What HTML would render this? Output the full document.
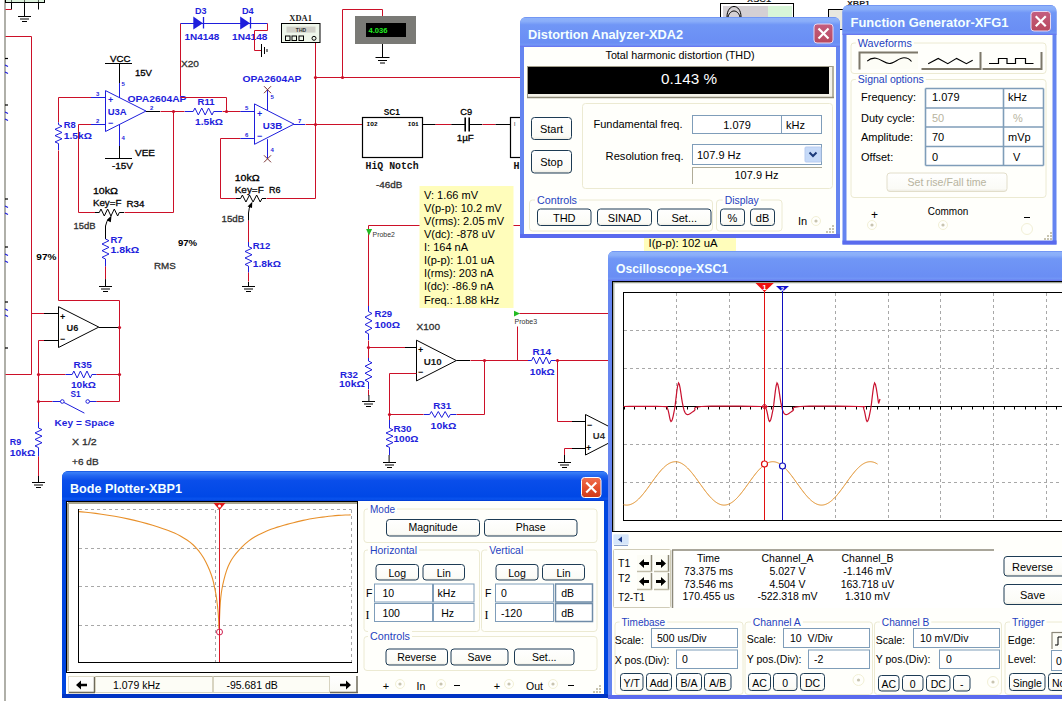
<!DOCTYPE html>
<html><head><meta charset="utf-8"><style>
html,body{margin:0;padding:0;background:#fff;width:1062px;height:701px;overflow:hidden}
svg{position:absolute;left:0;top:0;display:block}
</style></head><body>
<svg width="1062" height="701" viewBox="0 0 1062 701">
<rect x="0" y="0" width="1062" height="701" fill="#FFFFFF"/>
<defs>
<linearGradient id="tin" x1="0" y1="0" x2="0" y2="1">
 <stop offset="0" stop-color="#5A7EEE"/><stop offset="0.035" stop-color="#8EB2FA"/><stop offset="0.14" stop-color="#8AAEF9"/>
 <stop offset="0.26" stop-color="#7096F6"/><stop offset="0.85" stop-color="#6A8EF4"/><stop offset="0.93" stop-color="#7296F6"/><stop offset="1" stop-color="#6470EE"/>
</linearGradient>
<linearGradient id="tact" x1="0" y1="0" x2="0" y2="1">
 <stop offset="0" stop-color="#0A4AD8"/><stop offset="0.04" stop-color="#3A80F8"/><stop offset="0.16" stop-color="#2266F0"/>
 <stop offset="0.32" stop-color="#0A4EEA"/><stop offset="0.85" stop-color="#0048E6"/><stop offset="0.94" stop-color="#0A54EE"/><stop offset="1" stop-color="#0038D0"/>
</linearGradient>
<linearGradient id="cin" x1="0" y1="0" x2="0" y2="1">
 <stop offset="0" stop-color="#C45E80"/><stop offset="1" stop-color="#B8485E"/>
</linearGradient>
<linearGradient id="cact" x1="0" y1="0" x2="0" y2="1">
 <stop offset="0" stop-color="#F07050"/><stop offset="0.5" stop-color="#E4502C"/><stop offset="1" stop-color="#D03A18"/>
</linearGradient>
<linearGradient id="btn" x1="0" y1="0" x2="0" y2="1">
 <stop offset="0" stop-color="#FFFFFF"/><stop offset="0.85" stop-color="#FBFBF6"/><stop offset="1" stop-color="#ECEAE0"/>
</linearGradient>
</defs>
<line x1="5" y1="0" x2="5" y2="701" stroke="#85857A" stroke-width="1.3" />
<line x1="5" y1="58.5" x2="8" y2="58.5" stroke="#000" stroke-width="1.2" />
<line x1="5" y1="65" x2="8" y2="66.5" stroke="#1E1EDC" stroke-width="1.2" />
<line x1="5" y1="72" x2="8" y2="73.5" stroke="#1E1EDC" stroke-width="1.2" />
<line x1="5" y1="105" x2="8" y2="105" stroke="#000" stroke-width="1.2" />
<line x1="5" y1="112" x2="8" y2="113.5" stroke="#1E1EDC" stroke-width="1.2" />
<line x1="5" y1="119" x2="8" y2="120.5" stroke="#1E1EDC" stroke-width="1.2" />
<line x1="5" y1="199" x2="8" y2="199" stroke="#000" stroke-width="1.2" />
<line x1="5" y1="206" x2="8" y2="207.5" stroke="#1E1EDC" stroke-width="1.2" />
<line x1="5" y1="213" x2="8" y2="214.5" stroke="#1E1EDC" stroke-width="1.2" />
<line x1="5" y1="247" x2="8" y2="247" stroke="#000" stroke-width="1.2" />
<line x1="5" y1="254" x2="8" y2="255.5" stroke="#1E1EDC" stroke-width="1.2" />
<line x1="5" y1="261" x2="8" y2="262.5" stroke="#1E1EDC" stroke-width="1.2" />
<line x1="5" y1="302" x2="8" y2="302" stroke="#000" stroke-width="1.2" />
<line x1="5" y1="309" x2="8" y2="310.5" stroke="#1E1EDC" stroke-width="1.2" />
<line x1="5" y1="315" x2="8" y2="316.5" stroke="#1E1EDC" stroke-width="1.2" />
<line x1="5" y1="348" x2="8" y2="348" stroke="#000" stroke-width="1.2" />
<rect x="5.5" y="-5" width="39" height="7.5" fill="#DDF2DD" stroke="#000" stroke-width="1" rx="0" />
<line x1="11.5" y1="-5" x2="11.5" y2="2.5" stroke="#000" stroke-width="0.6" />
<line x1="24.5" y1="-5" x2="24.5" y2="2.5" stroke="#000" stroke-width="0.6" />
<line x1="38.5" y1="-5" x2="38.5" y2="2.5" stroke="#000" stroke-width="0.6" />
<line x1="11.5" y1="2" x2="11.5" y2="9.5" stroke="#000" stroke-width="1" />
<line x1="24.5" y1="2" x2="24.5" y2="16" stroke="#000" stroke-width="1" />
<line x1="38.5" y1="2" x2="38.5" y2="9.5" stroke="#000" stroke-width="1" />
<polyline points="5.5,9.5 11.5,9.5" stroke="#CC1028" stroke-width="1" fill="none" />
<line x1="18" y1="16.5" x2="31" y2="16.5" stroke="#000" stroke-width="1" />
<line x1="20" y1="19" x2="29" y2="19" stroke="#000" stroke-width="1" />
<line x1="22" y1="21.5" x2="27" y2="21.5" stroke="#000" stroke-width="1" />
<polyline points="5.5,36.5 31.5,36.5 31.5,374.5 5.5,374.5" stroke="#CC1028" stroke-width="1" fill="none" />
<polyline points="31.5,313.5 44.5,313.5" stroke="#CC1028" stroke-width="1" fill="none" />
<line x1="44" y1="313.5" x2="58.5" y2="313.5" stroke="#000" stroke-width="1" />
<polyline points="180.5,97.5 180.5,23.5" stroke="#CC1028" stroke-width="1" fill="none" />
<line x1="180.5" y1="23.5" x2="267.5" y2="23.5" stroke="#1E1EDC" stroke-width="1" />
<polygon points="193.3,16.6 202.9,23.3 193.3,29.5" stroke="none" stroke-width="1" fill="#1E1EDC" />
<line x1="203.5" y1="17" x2="203.5" y2="28.5" stroke="#1E1EDC" stroke-width="1.3" />
<polygon points="240.2,16.6 250,23.3 240.2,29.5" stroke="none" stroke-width="1" fill="#1E1EDC" />
<line x1="250.5" y1="17" x2="250.5" y2="28.5" stroke="#1E1EDC" stroke-width="1.3" />
<text xml:space="preserve" x="194.9" y="13.7" font-family='"Liberation Sans", sans-serif' font-size="9.2" fill="#1E1EDC" font-weight="bold" text-anchor="start" textLength="11.6" lengthAdjust="spacingAndGlyphs" >D3</text>
<text xml:space="preserve" x="242" y="13.7" font-family='"Liberation Sans", sans-serif' font-size="9.2" fill="#1E1EDC" font-weight="bold" text-anchor="start" textLength="11.7" lengthAdjust="spacingAndGlyphs" >D4</text>
<text xml:space="preserve" x="184.5" y="39.6" font-family='"Liberation Sans", sans-serif' font-size="9.2" fill="#1E1EDC" font-weight="bold" text-anchor="start" textLength="34.7" lengthAdjust="spacingAndGlyphs" >1N4148</text>
<text xml:space="preserve" x="232.1" y="39.6" font-family='"Liberation Sans", sans-serif' font-size="9.2" fill="#1E1EDC" font-weight="bold" text-anchor="start" textLength="35.3" lengthAdjust="spacingAndGlyphs" >1N4148</text>
<polyline points="267.5,23.5 267.5,30.5 254.5,30.5 254.5,50.5 261.5,50.5" stroke="#CC1028" stroke-width="1" fill="none" />
<line x1="261.5" y1="44" x2="261.5" y2="57" stroke="#000" stroke-width="1" />
<line x1="264.5" y1="47" x2="264.5" y2="54" stroke="#000" stroke-width="1" />
<line x1="267" y1="49" x2="267" y2="52" stroke="#000" stroke-width="1" />
<text xml:space="preserve" x="181" y="66.5" font-family='"Liberation Sans", sans-serif' font-size="9.6" fill="#303030" font-weight="normal" text-anchor="start" textLength="18" lengthAdjust="spacingAndGlyphs" stroke="#303030" stroke-width="0.3">X20</text>
<text xml:space="preserve" x="110" y="61.5" font-family='"Liberation Sans", sans-serif' font-size="9.6" fill="#000" font-weight="normal" text-anchor="start" textLength="20.5" lengthAdjust="spacingAndGlyphs" stroke="#000" stroke-width="0.3">VCC</text>
<line x1="105" y1="63.5" x2="132" y2="63.5" stroke="#000" stroke-width="1" />
<line x1="119.5" y1="63.5" x2="119.5" y2="83" stroke="#000" stroke-width="1" />
<line x1="119.5" y1="83" x2="119.5" y2="98" stroke="#1E1EDC" stroke-width="1" />
<text xml:space="preserve" x="135" y="75.5" font-family='"Liberation Sans", sans-serif' font-size="9.6" fill="#000" font-weight="normal" text-anchor="start" textLength="17" lengthAdjust="spacingAndGlyphs" stroke="#000" stroke-width="0.3">15V</text>
<text xml:space="preserve" x="121.5" y="86" font-family='"Liberation Sans", sans-serif' font-size="6" fill="#1E1EDC" font-weight="bold" text-anchor="start" >5</text>
<text xml:space="preserve" x="96" y="96" font-family='"Liberation Sans", sans-serif' font-size="6" fill="#1E1EDC" font-weight="bold" text-anchor="start" >3</text>
<text xml:space="preserve" x="96" y="123" font-family='"Liberation Sans", sans-serif' font-size="6" fill="#1E1EDC" font-weight="bold" text-anchor="start" >2</text>
<text xml:space="preserve" x="121.5" y="140" font-family='"Liberation Sans", sans-serif' font-size="6" fill="#1E1EDC" font-weight="bold" text-anchor="start" >4</text>
<text xml:space="preserve" x="150" y="110" font-family='"Liberation Sans", sans-serif' font-size="6" fill="#1E1EDC" font-weight="bold" text-anchor="start" >2</text>
<polygon points="105.5,90.6 146,111.05 105.5,131.5" stroke="#1E1EDC" stroke-width="1" fill="none" />
<text xml:space="preserve" x="108" y="103.3" font-family='"Liberation Sans", sans-serif' font-size="9" fill="#1E1EDC" font-weight="bold" text-anchor="start" >+</text>
<text xml:space="preserve" x="108" y="125.5" font-family='"Liberation Sans", sans-serif' font-size="9" fill="#1E1EDC" font-weight="bold" text-anchor="start" >−</text>
<text xml:space="preserve" x="107.7" y="114.8" font-family='"Liberation Sans", sans-serif' font-size="9.2" fill="#1E1EDC" font-weight="bold" text-anchor="start" textLength="19" lengthAdjust="spacingAndGlyphs" >U3A</text>
<text xml:space="preserve" x="127.5" y="102" font-family='"Liberation Sans", sans-serif' font-size="9.2" fill="#1E1EDC" font-weight="bold" text-anchor="start" textLength="59" lengthAdjust="spacingAndGlyphs" >OPA2604AP</text>
<polyline points="58.5,97.5 91.5,97.5" stroke="#CC1028" stroke-width="1" fill="none" />
<line x1="91" y1="97.5" x2="105.6" y2="97.5" stroke="#1E1EDC" stroke-width="1" />
<polyline points="78.5,124.5 91.5,124.5" stroke="#CC1028" stroke-width="1" fill="none" />
<line x1="91" y1="124.5" x2="105.6" y2="124.5" stroke="#1E1EDC" stroke-width="1" />
<line x1="119.5" y1="124.5" x2="119.5" y2="146" stroke="#1E1EDC" stroke-width="1" />
<line x1="119.5" y1="146" x2="119.5" y2="158.5" stroke="#000" stroke-width="1" />
<line x1="105" y1="158.5" x2="132" y2="158.5" stroke="#000" stroke-width="1" />
<text xml:space="preserve" x="135" y="155.5" font-family='"Liberation Sans", sans-serif' font-size="9.6" fill="#000" font-weight="normal" text-anchor="start" textLength="20" lengthAdjust="spacingAndGlyphs" stroke="#000" stroke-width="0.3">VEE</text>
<text xml:space="preserve" x="112" y="168.5" font-family='"Liberation Sans", sans-serif' font-size="9.6" fill="#000" font-weight="normal" text-anchor="start" textLength="21" lengthAdjust="spacingAndGlyphs" stroke="#000" stroke-width="0.3">-15V</text>
<polyline points="58.5,97.5 58.5,122.5" stroke="#CC1028" stroke-width="1" fill="none" />
<line x1="58.5" y1="122.5" x2="58.5" y2="124.6" stroke="#1E1EDC" stroke-width="1" />
<polyline points="58.5,124.6 62.0,126.175 55.0,129.325 62.0,132.475 55.0,135.625 62.0,138.775 55.0,141.925 58.5,143.5" stroke="#1E1EDC" stroke-width="1" fill="none" />
<line x1="58.5" y1="143.5" x2="58.5" y2="150" stroke="#1E1EDC" stroke-width="1" />
<polyline points="58.5,150.5 58.5,300.5 119.5,300.5 119.5,401.5" stroke="#CC1028" stroke-width="1" fill="none" />
<text xml:space="preserve" x="63.7" y="127.6" font-family='"Liberation Sans", sans-serif' font-size="9.2" fill="#1E1EDC" font-weight="bold" text-anchor="start" textLength="12" lengthAdjust="spacingAndGlyphs" >R8</text>
<text xml:space="preserve" x="63.7" y="139" font-family='"Liberation Sans", sans-serif' font-size="9.2" fill="#1E1EDC" font-weight="bold" text-anchor="start" textLength="28.2" lengthAdjust="spacingAndGlyphs" >1.5kΩ</text>
<polyline points="78.5,124.5 78.5,212.5 95.5,212.5" stroke="#CC1028" stroke-width="1" fill="none" />
<line x1="95" y1="212.5" x2="99.3" y2="212.5" stroke="#000" stroke-width="1" />
<polyline points="99.3,212.5 100.96666666666667,209.0 104.3,216.0 107.63333333333333,209.0 110.96666666666667,216.0 114.3,209.0 117.63333333333333,216.0 119.3,212.5" stroke="#000" stroke-width="1" fill="none" />
<line x1="119.3" y1="212.5" x2="124" y2="212.5" stroke="#000" stroke-width="1" />
<polyline points="124.5,212.5 173.5,212.5 173.5,111.5" stroke="#CC1028" stroke-width="1" fill="none" />
<path d="M105.5,239 L105.5,226 Q106.5,221 109,218.5" stroke="#000" stroke-width="1" fill="none"/>
<polygon points="111.6,215.2 106.6,220.2 110.8,222.2" stroke="none" stroke-width="1" fill="#000" />
<text xml:space="preserve" x="92.9" y="194" font-family='"Liberation Sans", sans-serif' font-size="9.6" fill="#000" font-weight="normal" text-anchor="start" textLength="25" lengthAdjust="spacingAndGlyphs" stroke="#000" stroke-width="0.3">10kΩ</text>
<text xml:space="preserve" x="92.9" y="205.7" font-family='"Liberation Sans", sans-serif' font-size="9.6" fill="#000" font-weight="normal" text-anchor="start" textLength="28.5" lengthAdjust="spacingAndGlyphs" stroke="#000" stroke-width="0.3">Key=F</text>
<text xml:space="preserve" x="126.4" y="206.7" font-family='"Liberation Sans", sans-serif' font-size="9.6" fill="#000" font-weight="normal" text-anchor="start" textLength="18" lengthAdjust="spacingAndGlyphs" stroke="#000" stroke-width="0.3">R34</text>
<text xml:space="preserve" x="73.6" y="229" font-family='"Liberation Sans", sans-serif' font-size="9.6" fill="#303030" font-weight="normal" text-anchor="start" textLength="22" lengthAdjust="spacingAndGlyphs" stroke="#303030" stroke-width="0.3">15dB</text>
<polyline points="105.5,239 109.0,240.66666666666666 102.0,244.0 109.0,247.33333333333334 102.0,250.66666666666666 109.0,254.0 102.0,257.3333333333333 105.5,259" stroke="#1E1EDC" stroke-width="1" fill="none" />
<line x1="105.5" y1="259" x2="105.5" y2="266.7" stroke="#1E1EDC" stroke-width="1" />
<polyline points="105.5,266.5 105.5,279.5" stroke="#CC1028" stroke-width="1" fill="none" />
<line x1="105.5" y1="279.2" x2="105.5" y2="286.3" stroke="#000" stroke-width="1" />
<line x1="99.0" y1="286.5" x2="112.0" y2="286.5" stroke="#000" stroke-width="1" />
<line x1="101.0" y1="289.0" x2="110.0" y2="289.0" stroke="#000" stroke-width="1" />
<line x1="103.0" y1="291.5" x2="108.0" y2="291.5" stroke="#000" stroke-width="1" />
<text xml:space="preserve" x="110.4" y="243" font-family='"Liberation Sans", sans-serif' font-size="9.2" fill="#1E1EDC" font-weight="bold" text-anchor="start" textLength="12.2" lengthAdjust="spacingAndGlyphs" >R7</text>
<text xml:space="preserve" x="110.4" y="252.9" font-family='"Liberation Sans", sans-serif' font-size="9.2" fill="#1E1EDC" font-weight="bold" text-anchor="start" textLength="28.9" lengthAdjust="spacingAndGlyphs" >1.8kΩ</text>
<text xml:space="preserve" x="177.9" y="246.4" font-family='"Liberation Sans", sans-serif' font-size="9.6" fill="#000" font-weight="bold" text-anchor="start" textLength="19.2" lengthAdjust="spacingAndGlyphs" >97%</text>
<text xml:space="preserve" x="153.9" y="268.6" font-family='"Liberation Sans", sans-serif' font-size="9.6" fill="#303030" font-weight="normal" text-anchor="start" textLength="21.8" lengthAdjust="spacingAndGlyphs" stroke="#303030" stroke-width="0.3">RMS</text>
<text xml:space="preserve" x="36.3" y="260" font-family='"Liberation Sans", sans-serif' font-size="9.6" fill="#000" font-weight="bold" text-anchor="start" textLength="20.1" lengthAdjust="spacingAndGlyphs" >97%</text>
<line x1="146" y1="111.5" x2="160" y2="111.5" stroke="#000" stroke-width="1" />
<polyline points="160.5,111.5 184.5,111.5" stroke="#CC1028" stroke-width="1" fill="none" />
<line x1="184.8" y1="111.5" x2="193.2" y2="111.5" stroke="#1E1EDC" stroke-width="1" />
<polyline points="193.2,111.5 194.90833333333333,108.0 198.325,115.0 201.74166666666665,108.0 205.15833333333333,115.0 208.575,108.0 211.99166666666665,115.0 213.7,111.5" stroke="#1E1EDC" stroke-width="1" fill="none" />
<line x1="213.7" y1="111.5" x2="222" y2="111.5" stroke="#1E1EDC" stroke-width="1" />
<polyline points="222.5,111.5 240.5,111.5" stroke="#CC1028" stroke-width="1" fill="none" />
<line x1="240.4" y1="111.5" x2="254.4" y2="111.5" stroke="#1E1EDC" stroke-width="1" />
<circle cx="173.5" cy="111.5" r="1.6" fill="#CC1028"/>
<circle cx="226.5" cy="111.5" r="1.6" fill="#CC1028"/>
<polyline points="180.5,97.5 226.5,97.5 226.5,111.5" stroke="#CC1028" stroke-width="1" fill="none" />
<text xml:space="preserve" x="197.5" y="104.9" font-family='"Liberation Sans", sans-serif' font-size="9.2" fill="#1E1EDC" font-weight="bold" text-anchor="start" textLength="17" lengthAdjust="spacingAndGlyphs" >R11</text>
<text xml:space="preserve" x="195" y="124.8" font-family='"Liberation Sans", sans-serif' font-size="9.2" fill="#1E1EDC" font-weight="bold" text-anchor="start" textLength="28" lengthAdjust="spacingAndGlyphs" >1.5kΩ</text>
<text xml:space="preserve" x="242.5" y="82" font-family='"Liberation Sans", sans-serif' font-size="9.2" fill="#1E1EDC" font-weight="bold" text-anchor="start" textLength="59" lengthAdjust="spacingAndGlyphs" >OPA2604AP</text>
<polygon points="254.5,103.9 294,124.10000000000001 254.5,144.3" stroke="#1E1EDC" stroke-width="1" fill="none" />
<text xml:space="preserve" x="257" y="116.5" font-family='"Liberation Sans", sans-serif' font-size="9" fill="#1E1EDC" font-weight="bold" text-anchor="start" >+</text>
<text xml:space="preserve" x="257" y="138.5" font-family='"Liberation Sans", sans-serif' font-size="9" fill="#1E1EDC" font-weight="bold" text-anchor="start" >−</text>
<text xml:space="preserve" x="262.8" y="129" font-family='"Liberation Sans", sans-serif' font-size="9.2" fill="#1E1EDC" font-weight="bold" text-anchor="start" textLength="19.5" lengthAdjust="spacingAndGlyphs" >U3B</text>
<text xml:space="preserve" x="245" y="110" font-family='"Liberation Sans", sans-serif' font-size="6" fill="#1E1EDC" font-weight="bold" text-anchor="start" >5</text>
<text xml:space="preserve" x="245" y="137" font-family='"Liberation Sans", sans-serif' font-size="6" fill="#1E1EDC" font-weight="bold" text-anchor="start" >6</text>
<text xml:space="preserve" x="270.5" y="99" font-family='"Liberation Sans", sans-serif' font-size="6" fill="#1E1EDC" font-weight="bold" text-anchor="start" >5</text>
<text xml:space="preserve" x="270.5" y="152" font-family='"Liberation Sans", sans-serif' font-size="6" fill="#1E1EDC" font-weight="bold" text-anchor="start" >4</text>
<text xml:space="preserve" x="298" y="123" font-family='"Liberation Sans", sans-serif' font-size="6" fill="#1E1EDC" font-weight="bold" text-anchor="start" >7</text>
<line x1="267.5" y1="89.7" x2="267.5" y2="110" stroke="#1E1EDC" stroke-width="1" />
<line x1="267.5" y1="139.2" x2="267.5" y2="158.8" stroke="#1E1EDC" stroke-width="1" />
<line x1="264.0" y1="86.2" x2="271.0" y2="93.2" stroke="#7A3030" stroke-width="1" />
<line x1="264.0" y1="93.2" x2="271.0" y2="86.2" stroke="#7A3030" stroke-width="1" />
<line x1="264.0" y1="155.3" x2="271.0" y2="162.3" stroke="#7A3030" stroke-width="1" />
<line x1="264.0" y1="162.3" x2="271.0" y2="155.3" stroke="#7A3030" stroke-width="1" />
<polyline points="220.5,138.5 240.5,138.5" stroke="#CC1028" stroke-width="1" fill="none" />
<line x1="240.4" y1="138.5" x2="254.4" y2="138.5" stroke="#1E1EDC" stroke-width="1" />
<line x1="294" y1="124.5" x2="305" y2="124.5" stroke="#1E1EDC" stroke-width="1" />
<polyline points="305.5,124.5 362.5,124.5" stroke="#CC1028" stroke-width="1" fill="none" />
<circle cx="315.5" cy="124.5" r="1.6" fill="#CC1028"/>
<circle cx="315.5" cy="77.5" r="1.6" fill="#CC1028"/>
<circle cx="342.5" cy="77.5" r="1.6" fill="#CC1028"/>
<polyline points="220.5,138.5 220.5,198.5 236.5,198.5" stroke="#CC1028" stroke-width="1" fill="none" />
<line x1="236" y1="198.5" x2="240.6" y2="198.5" stroke="#000" stroke-width="1" />
<polyline points="240.6,198.5 242.38333333333333,195.0 245.95,202.0 249.51666666666665,195.0 253.08333333333334,202.0 256.65,195.0 260.21666666666664,202.0 262,198.5" stroke="#000" stroke-width="1" fill="none" />
<line x1="262" y1="198.5" x2="266" y2="198.5" stroke="#000" stroke-width="1" />
<polyline points="266.5,198.5 315.5,198.5 315.5,42.5" stroke="#CC1028" stroke-width="1" fill="none" />
<path d="M248.5,220.7 L248.5,213 Q249,207.5 250.5,205" stroke="#000" stroke-width="1" fill="none"/>
<polygon points="252.3,201.8 247.6,206.5 252,208" stroke="none" stroke-width="1" fill="#000" />
<text xml:space="preserve" x="234.7" y="181.3" font-family='"Liberation Sans", sans-serif' font-size="9.6" fill="#000" font-weight="normal" text-anchor="start" textLength="25" lengthAdjust="spacingAndGlyphs" stroke="#000" stroke-width="0.3">10kΩ</text>
<text xml:space="preserve" x="234.7" y="192.5" font-family='"Liberation Sans", sans-serif' font-size="9.6" fill="#000" font-weight="normal" text-anchor="start" textLength="29.1" lengthAdjust="spacingAndGlyphs" stroke="#000" stroke-width="0.3">Key=F</text>
<text xml:space="preserve" x="269" y="192.5" font-family='"Liberation Sans", sans-serif' font-size="9.6" fill="#000" font-weight="normal" text-anchor="start" textLength="11.5" lengthAdjust="spacingAndGlyphs" stroke="#000" stroke-width="0.3">R6</text>
<text xml:space="preserve" x="221.5" y="221.6" font-family='"Liberation Sans", sans-serif' font-size="9.6" fill="#303030" font-weight="normal" text-anchor="start" textLength="22.8" lengthAdjust="spacingAndGlyphs" stroke="#303030" stroke-width="0.3">15dB</text>
<polyline points="248.5,220.5 248.5,242.5" stroke="#CC1028" stroke-width="1" fill="none" />
<line x1="248.5" y1="242" x2="248.5" y2="246.6" stroke="#1E1EDC" stroke-width="1" />
<polyline points="248.5,246.6 252.0,248.225 245.0,251.475 252.0,254.725 245.0,257.975 252.0,261.225 245.0,264.475 248.5,266.1" stroke="#1E1EDC" stroke-width="1" fill="none" />
<line x1="248.5" y1="266.1" x2="248.5" y2="272.6" stroke="#1E1EDC" stroke-width="1" />
<polyline points="248.5,272.5 248.5,281.5" stroke="#CC1028" stroke-width="1" fill="none" />
<line x1="248.5" y1="281.9" x2="248.5" y2="286.5" stroke="#000" stroke-width="1" />
<line x1="242.0" y1="286.5" x2="255.0" y2="286.5" stroke="#000" stroke-width="1" />
<line x1="244.0" y1="289.0" x2="253.0" y2="289.0" stroke="#000" stroke-width="1" />
<line x1="246.0" y1="291.5" x2="251.0" y2="291.5" stroke="#000" stroke-width="1" />
<text xml:space="preserve" x="252.7" y="249.4" font-family='"Liberation Sans", sans-serif' font-size="9.2" fill="#1E1EDC" font-weight="bold" text-anchor="start" textLength="17.6" lengthAdjust="spacingAndGlyphs" >R12</text>
<text xml:space="preserve" x="252.7" y="267" font-family='"Liberation Sans", sans-serif' font-size="9.2" fill="#1E1EDC" font-weight="bold" text-anchor="start" textLength="28.2" lengthAdjust="spacingAndGlyphs" >1.8kΩ</text>
<text xml:space="preserve" x="289.3" y="20.7" font-family='"Liberation Serif", serif' font-size="9" fill="#222" font-weight="bold" text-anchor="start" textLength="22.6" lengthAdjust="spacingAndGlyphs" >XDA1</text>
<rect x="281.5" y="23.5" width="38.5" height="19" fill="#EEF6EA" stroke="#000" stroke-width="1" rx="0" />
<rect x="286.5" y="26.6" width="29" height="6" fill="#D0D0C8" stroke="none" stroke-width="1" rx="0" />
<text xml:space="preserve" x="301" y="32" font-family='"Liberation Sans", sans-serif' font-size="5" fill="#333" font-weight="bold" text-anchor="middle" >THD</text>
<rect x="285.5" y="36" width="4.5" height="4.5" fill="none" stroke="#000" stroke-width="1" rx="0" />
<rect x="292" y="36" width="4.5" height="4.5" fill="none" stroke="#000" stroke-width="1" rx="0" />
<rect x="299" y="36" width="4.5" height="4.5" fill="none" stroke="#000" stroke-width="1" rx="0" />
<circle cx="314" cy="38.3" r="2" fill="none" stroke="#000" stroke-width="1"/>
<polyline points="315.5,77.5 520.5,77.5" stroke="#CC1028" stroke-width="1" fill="none" />
<polyline points="342.5,77.5 342.5,9.5 382.5,9.5 382.5,16.5" stroke="#CC1028" stroke-width="1" fill="none" />
<rect x="355" y="16" width="61" height="28" fill="#7A7A76" stroke="none" stroke-width="1" rx="0" />
<rect x="366" y="23" width="40" height="14" fill="#000" stroke="none" stroke-width="1" rx="0" />
<text xml:space="preserve" x="368.5" y="33" font-family='"Liberation Sans", sans-serif' font-size="7" fill="#22EE22" font-weight="bold" text-anchor="start" textLength="19" lengthAdjust="spacingAndGlyphs" >4.036</text>
<line x1="382.5" y1="44" x2="382.5" y2="57" stroke="#000" stroke-width="1" />
<line x1="375.5" y1="57.5" x2="389.5" y2="57.5" stroke="#000" stroke-width="1" />
<line x1="378" y1="60.5" x2="387" y2="60.5" stroke="#000" stroke-width="1" />
<line x1="380" y1="63" x2="385" y2="63" stroke="#000" stroke-width="1" />
<rect x="362.5" y="117.5" width="60" height="40" fill="#FFF" stroke="#000" stroke-width="1.2" rx="0" />
<text xml:space="preserve" x="383.7" y="115" font-family='"Liberation Sans", sans-serif' font-size="9.2" fill="#000" font-weight="bold" text-anchor="start" textLength="16.3" lengthAdjust="spacingAndGlyphs" >SC1</text>
<text xml:space="preserve" x="366.6" y="125.6" font-family='"Liberation Mono", monospace' font-size="5" fill="#000" font-weight="bold" text-anchor="start" textLength="11" lengthAdjust="spacingAndGlyphs" >IO2</text>
<text xml:space="preserve" x="407.8" y="125.6" font-family='"Liberation Mono", monospace' font-size="5" fill="#000" font-weight="bold" text-anchor="start" textLength="11" lengthAdjust="spacingAndGlyphs" >IO1</text>
<text xml:space="preserve" x="365.6" y="168.8" font-family='"Liberation Mono", monospace' font-size="10" fill="#111" font-weight="bold" text-anchor="start" textLength="53" lengthAdjust="spacingAndGlyphs" >HiQ Notch</text>
<text xml:space="preserve" x="376" y="187.7" font-family='"Liberation Sans", sans-serif' font-size="9.6" fill="#303030" font-weight="normal" text-anchor="start" textLength="26.4" lengthAdjust="spacingAndGlyphs" stroke="#303030" stroke-width="0.3">-46dB</text>
<line x1="422.6" y1="124.5" x2="435.7" y2="124.5" stroke="#000" stroke-width="1" />
<polyline points="435.5,124.5 451.5,124.5" stroke="#CC1028" stroke-width="1" fill="none" />
<line x1="451.3" y1="124.5" x2="465" y2="124.5" stroke="#000" stroke-width="1" />
<line x1="465.2" y1="117.4" x2="465.2" y2="131.5" stroke="#000" stroke-width="1.6" />
<line x1="469.2" y1="117.4" x2="469.2" y2="131.5" stroke="#000" stroke-width="1.6" />
<line x1="469" y1="124.5" x2="482.3" y2="124.5" stroke="#000" stroke-width="1" />
<polyline points="482.5,124.5 495.5,124.5" stroke="#CC1028" stroke-width="1" fill="none" />
<line x1="495.5" y1="124.5" x2="510.3" y2="124.5" stroke="#000" stroke-width="1" />
<text xml:space="preserve" x="460.3" y="115" font-family='"Liberation Sans", sans-serif' font-size="9.6" fill="#000" font-weight="normal" text-anchor="start" textLength="11.9" lengthAdjust="spacingAndGlyphs" stroke="#000" stroke-width="0.3">C9</text>
<text xml:space="preserve" x="456.7" y="140.5" font-family='"Liberation Sans", sans-serif' font-size="9.6" fill="#000" font-weight="normal" text-anchor="start" textLength="17.1" lengthAdjust="spacingAndGlyphs" stroke="#000" stroke-width="0.3">1µF</text>
<rect x="510.5" y="117.5" width="30" height="40" fill="#FFF" stroke="#000" stroke-width="1.2" rx="0" />
<text xml:space="preserve" x="514" y="125.6" font-family='"Liberation Sans", sans-serif' font-size="5" fill="#000" font-weight="normal" text-anchor="start" >I</text>
<text xml:space="preserve" x="513.4" y="168.8" font-family='"Liberation Mono", monospace' font-size="10" fill="#111" font-weight="bold" text-anchor="start" >H</text>
<polyline points="368.5,225.5 520.5,225.5" stroke="#CC1028" stroke-width="1" fill="none" />
<polyline points="368.5,225.5 368.5,306.5" stroke="#CC1028" stroke-width="1" fill="none" />
<line x1="368.5" y1="306" x2="368.5" y2="311.6" stroke="#1E1EDC" stroke-width="1" />
<polygon points="366.1,228.9 372.1,228.9 369,235.4" stroke="none" stroke-width="1" fill="#22BB22" />
<text xml:space="preserve" x="372.6" y="237" font-family='"Liberation Sans", sans-serif' font-size="6.5" fill="#333" font-weight="normal" text-anchor="start" textLength="22.3" lengthAdjust="spacingAndGlyphs" >Probe2</text>
<polyline points="368.5,311.6 372.0,313.45000000000005 365.0,317.15000000000003 372.0,320.85 365.0,324.55 372.0,328.25 365.0,331.95 368.5,333.8" stroke="#1E1EDC" stroke-width="1" fill="none" />
<line x1="368.5" y1="333.8" x2="368.5" y2="340" stroke="#1E1EDC" stroke-width="1" />
<polyline points="368.5,340.5 368.5,358.5" stroke="#CC1028" stroke-width="1" fill="none" />
<circle cx="368.5" cy="347.5" r="1.6" fill="#CC1028"/>
<polyline points="368.5,347.5 405.5,347.5" stroke="#CC1028" stroke-width="1" fill="none" />
<line x1="405" y1="347.5" x2="416.5" y2="347.5" stroke="#000" stroke-width="1" />
<line x1="368.5" y1="358" x2="368.5" y2="361" stroke="#1E1EDC" stroke-width="1" />
<polyline points="368.5,361 372.0,362.75 365.0,366.25 372.0,369.75 365.0,373.25 372.0,376.75 365.0,380.25 368.5,382" stroke="#1E1EDC" stroke-width="1" fill="none" />
<line x1="368.5" y1="382" x2="368.5" y2="389" stroke="#1E1EDC" stroke-width="1" />
<polyline points="368.5,389.5 368.5,395.5" stroke="#CC1028" stroke-width="1" fill="none" />
<line x1="368.9" y1="395" x2="368.9" y2="401" stroke="#000" stroke-width="1" />
<line x1="362.0" y1="401.5" x2="375.0" y2="401.5" stroke="#000" stroke-width="1" />
<line x1="364.0" y1="404.0" x2="373.0" y2="404.0" stroke="#000" stroke-width="1" />
<line x1="366.0" y1="406.5" x2="371.0" y2="406.5" stroke="#000" stroke-width="1" />
<text xml:space="preserve" x="374.5" y="317" font-family='"Liberation Sans", sans-serif' font-size="9.2" fill="#1E1EDC" font-weight="bold" text-anchor="start" textLength="17.6" lengthAdjust="spacingAndGlyphs" >R29</text>
<text xml:space="preserve" x="374.5" y="328.3" font-family='"Liberation Sans", sans-serif' font-size="9.2" fill="#1E1EDC" font-weight="bold" text-anchor="start" textLength="25.6" lengthAdjust="spacingAndGlyphs" >100Ω</text>
<text xml:space="preserve" x="340" y="377.5" font-family='"Liberation Sans", sans-serif' font-size="9.2" fill="#1E1EDC" font-weight="bold" text-anchor="start" textLength="18" lengthAdjust="spacingAndGlyphs" >R32</text>
<text xml:space="preserve" x="339" y="387.2" font-family='"Liberation Sans", sans-serif' font-size="9.2" fill="#1E1EDC" font-weight="bold" text-anchor="start" textLength="26" lengthAdjust="spacingAndGlyphs" >10kΩ</text>
<text xml:space="preserve" x="416.5" y="329.5" font-family='"Liberation Sans", sans-serif' font-size="9.6" fill="#303030" font-weight="normal" text-anchor="start" textLength="23.5" lengthAdjust="spacingAndGlyphs" stroke="#303030" stroke-width="0.3">X100</text>
<polygon points="416.5,340.2 456.3,360.54999999999995 416.5,380.9" stroke="#000" stroke-width="1" fill="none" />
<text xml:space="preserve" x="418" y="352.5" font-family='"Liberation Sans", sans-serif' font-size="9" fill="#000" font-weight="bold" text-anchor="start" >+</text>
<text xml:space="preserve" x="418" y="375" font-family='"Liberation Sans", sans-serif' font-size="9" fill="#000" font-weight="bold" text-anchor="start" >−</text>
<text xml:space="preserve" x="423.7" y="365" font-family='"Liberation Sans", sans-serif' font-size="9.2" fill="#202020" font-weight="bold" text-anchor="start" textLength="18" lengthAdjust="spacingAndGlyphs" >U10</text>
<line x1="456.3" y1="360.5" x2="470" y2="360.5" stroke="#000" stroke-width="1" />
<polyline points="470.5,360.5 528.5,360.5" stroke="#CC1028" stroke-width="1" fill="none" />
<line x1="528" y1="360.5" x2="531.7" y2="360.5" stroke="#1E1EDC" stroke-width="1" />
<polyline points="531.7,360.5 533.3083333333334,357.0 536.5250000000001,364.0 539.7416666666667,357.0 542.9583333333334,364.0 546.175,357.0 549.3916666666667,364.0 551,360.5" stroke="#1E1EDC" stroke-width="1" fill="none" />
<line x1="551" y1="360.5" x2="555.9" y2="360.5" stroke="#1E1EDC" stroke-width="1" />
<polyline points="555.5,360.5 610.5,360.5" stroke="#CC1028" stroke-width="1" fill="none" />
<circle cx="484.5" cy="360.5" r="1.6" fill="#CC1028"/>
<circle cx="557.5" cy="360.5" r="1.6" fill="#CC1028"/>
<polyline points="484.5,360.5 484.5,414.5 456.5,414.5" stroke="#CC1028" stroke-width="1" fill="none" />
<line x1="456.3" y1="414.5" x2="450.3" y2="414.5" stroke="#1E1EDC" stroke-width="1" />
<polyline points="429.7,414.5 431.41666666666663,411.5 434.85,417.5 438.2833333333333,411.5 441.7166666666667,417.5 445.15,411.5 448.58333333333337,417.5 450.3,414.5" stroke="#1E1EDC" stroke-width="1" fill="none" />
<line x1="429.7" y1="414.5" x2="423.7" y2="414.5" stroke="#1E1EDC" stroke-width="1" />
<polyline points="423.5,414.5 389.5,414.5" stroke="#CC1028" stroke-width="1" fill="none" />
<circle cx="389.5" cy="414.5" r="1.6" fill="#CC1028"/>
<polyline points="416.5,373.5 389.5,373.5 389.5,420.5" stroke="#CC1028" stroke-width="1" fill="none" />
<line x1="389.5" y1="420" x2="389.5" y2="428.2" stroke="#1E1EDC" stroke-width="1" />
<polyline points="389.5,428.2 393.0,429.8 386.0,433.0 393.0,436.2 386.0,439.4 393.0,442.59999999999997 386.0,445.79999999999995 389.5,447.4" stroke="#1E1EDC" stroke-width="1" fill="none" />
<line x1="389.5" y1="447.4" x2="389.5" y2="455" stroke="#1E1EDC" stroke-width="1" />
<line x1="389.1" y1="455" x2="389.1" y2="462.4" stroke="#000" stroke-width="1" />
<line x1="383.0" y1="462.5" x2="396.0" y2="462.5" stroke="#000" stroke-width="1" />
<line x1="385.0" y1="465.0" x2="394.0" y2="465.0" stroke="#000" stroke-width="1" />
<line x1="387.0" y1="467.5" x2="392.0" y2="467.5" stroke="#000" stroke-width="1" />
<text xml:space="preserve" x="433.2" y="409" font-family='"Liberation Sans", sans-serif' font-size="9.2" fill="#1E1EDC" font-weight="bold" text-anchor="start" textLength="18" lengthAdjust="spacingAndGlyphs" >R31</text>
<text xml:space="preserve" x="430.6" y="429" font-family='"Liberation Sans", sans-serif' font-size="9.2" fill="#1E1EDC" font-weight="bold" text-anchor="start" textLength="25.7" lengthAdjust="spacingAndGlyphs" >10kΩ</text>
<text xml:space="preserve" x="393.4" y="431.5" font-family='"Liberation Sans", sans-serif' font-size="9.2" fill="#1E1EDC" font-weight="bold" text-anchor="start" textLength="18.2" lengthAdjust="spacingAndGlyphs" >R30</text>
<text xml:space="preserve" x="393.4" y="442" font-family='"Liberation Sans", sans-serif' font-size="9.2" fill="#1E1EDC" font-weight="bold" text-anchor="start" textLength="25.1" lengthAdjust="spacingAndGlyphs" >100Ω</text>
<polyline points="519.5,313.5 610.5,313.5" stroke="#CC1028" stroke-width="1" fill="none" />
<polyline points="517.5,326.5 517.5,360.5" stroke="#CC1028" stroke-width="1" fill="none" />
<polygon points="514,310.7 514,316.4 520,313.5" stroke="none" stroke-width="1" fill="#22BB22" />
<text xml:space="preserve" x="514.5" y="323.5" font-family='"Liberation Sans", sans-serif' font-size="6.5" fill="#333" font-weight="normal" text-anchor="start" textLength="22.6" lengthAdjust="spacingAndGlyphs" >Probe3</text>
<text xml:space="preserve" x="532.6" y="354.5" font-family='"Liberation Sans", sans-serif' font-size="9.2" fill="#1E1EDC" font-weight="bold" text-anchor="start" textLength="18.4" lengthAdjust="spacingAndGlyphs" >R14</text>
<text xml:space="preserve" x="529.8" y="374.5" font-family='"Liberation Sans", sans-serif' font-size="9.2" fill="#1E1EDC" font-weight="bold" text-anchor="start" textLength="24.9" lengthAdjust="spacingAndGlyphs" >10kΩ</text>
<polyline points="557.5,360.5 557.5,421.5 572.5,421.5" stroke="#CC1028" stroke-width="1" fill="none" />
<line x1="572" y1="421.5" x2="585.5" y2="421.5" stroke="#000" stroke-width="1" />
<polygon points="585.5,414.5 625,434.7 585.5,455" stroke="#000" stroke-width="1" fill="none" />
<text xml:space="preserve" x="587" y="428" font-family='"Liberation Sans", sans-serif' font-size="9" fill="#000" font-weight="bold" text-anchor="start" >−</text>
<text xml:space="preserve" x="586" y="450.5" font-family='"Liberation Sans", sans-serif' font-size="9" fill="#000" font-weight="bold" text-anchor="start" >+</text>
<text xml:space="preserve" x="592.8" y="438.5" font-family='"Liberation Sans", sans-serif' font-size="9.2" fill="#303030" font-weight="bold" text-anchor="start" textLength="12.2" lengthAdjust="spacingAndGlyphs" >U4</text>
<polyline points="564.5,462.5 564.5,448.5 572.5,448.5" stroke="#CC1028" stroke-width="1" fill="none" />
<line x1="572" y1="448.5" x2="585.5" y2="448.5" stroke="#000" stroke-width="1" />
<line x1="564.5" y1="455" x2="564.5" y2="462.5" stroke="#000" stroke-width="1" />
<line x1="558.0" y1="462.5" x2="571.0" y2="462.5" stroke="#000" stroke-width="1" />
<line x1="560.0" y1="465.0" x2="569.0" y2="465.0" stroke="#000" stroke-width="1" />
<line x1="562.0" y1="467.5" x2="567.0" y2="467.5" stroke="#000" stroke-width="1" />
<polygon points="58.5,306.7 98.8,327.1 58.5,347.5" stroke="#000" stroke-width="1" fill="none" />
<text xml:space="preserve" x="60" y="319.5" font-family='"Liberation Sans", sans-serif' font-size="9" fill="#000" font-weight="bold" text-anchor="start" >+</text>
<text xml:space="preserve" x="60" y="341.5" font-family='"Liberation Sans", sans-serif' font-size="9" fill="#000" font-weight="bold" text-anchor="start" >−</text>
<text xml:space="preserve" x="66.6" y="330.7" font-family='"Liberation Sans", sans-serif' font-size="9.2" fill="#101010" font-weight="bold" text-anchor="start" textLength="11.8" lengthAdjust="spacingAndGlyphs" >U6</text>
<line x1="98.8" y1="327.5" x2="119.7" y2="327.5" stroke="#000" stroke-width="1" />
<circle cx="119.5" cy="327.5" r="1.6" fill="#CC1028"/>
<polyline points="38.5,340.5 44.5,340.5" stroke="#CC1028" stroke-width="1" fill="none" />
<line x1="44" y1="340.5" x2="58.3" y2="340.5" stroke="#000" stroke-width="1" />
<polyline points="38.5,340.5 38.5,422.5" stroke="#CC1028" stroke-width="1" fill="none" />
<line x1="38.5" y1="422" x2="38.5" y2="428" stroke="#1E1EDC" stroke-width="1" />
<polyline points="38.5,374.5 65.5,374.5" stroke="#CC1028" stroke-width="1" fill="none" />
<line x1="65.6" y1="374.5" x2="72.2" y2="374.5" stroke="#1E1EDC" stroke-width="1" />
<polyline points="72.2,374.5 73.84166666666667,371.0 77.125,378.0 80.40833333333333,371.0 83.69166666666668,378.0 86.97500000000001,371.0 90.25833333333334,378.0 91.9,374.5" stroke="#1E1EDC" stroke-width="1" fill="none" />
<line x1="91.9" y1="374.5" x2="96.7" y2="374.5" stroke="#1E1EDC" stroke-width="1" />
<polyline points="96.5,374.5 119.5,374.5" stroke="#CC1028" stroke-width="1" fill="none" />
<circle cx="38.5" cy="374.5" r="1.6" fill="#CC1028"/>
<circle cx="119.5" cy="374.5" r="1.6" fill="#CC1028"/>
<circle cx="38.5" cy="401.5" r="1.6" fill="#CC1028"/>
<text xml:space="preserve" x="73.5" y="367.7" font-family='"Liberation Sans", sans-serif' font-size="9.2" fill="#1E1EDC" font-weight="bold" text-anchor="start" textLength="18.3" lengthAdjust="spacingAndGlyphs" >R35</text>
<text xml:space="preserve" x="70.9" y="388" font-family='"Liberation Sans", sans-serif' font-size="9.2" fill="#1E1EDC" font-weight="bold" text-anchor="start" textLength="25" lengthAdjust="spacingAndGlyphs" >10kΩ</text>
<polyline points="38.5,401.5 52.5,401.5" stroke="#CC1028" stroke-width="1" fill="none" />
<line x1="52.5" y1="401.5" x2="60.5" y2="401.5" stroke="#1E1EDC" stroke-width="1" />
<circle cx="62.3" cy="401.5" r="1.8" fill="none" stroke="#1E1EDC" stroke-width="1"/>
<circle cx="87.7" cy="401.5" r="1.8" fill="none" stroke="#1E1EDC" stroke-width="1"/>
<line x1="64" y1="402.5" x2="84.4" y2="413.1" stroke="#1E1EDC" stroke-width="1" />
<line x1="89.5" y1="401.5" x2="96.7" y2="401.5" stroke="#1E1EDC" stroke-width="1" />
<polyline points="96.5,401.5 119.5,401.5" stroke="#CC1028" stroke-width="1" fill="none" />
<text xml:space="preserve" x="70.5" y="396.7" font-family='"Liberation Sans", sans-serif' font-size="9.2" fill="#1E1EDC" font-weight="bold" text-anchor="start" textLength="10.2" lengthAdjust="spacingAndGlyphs" >S1</text>
<text xml:space="preserve" x="54.6" y="425.7" font-family='"Liberation Sans", sans-serif' font-size="9.2" fill="#1E1EDC" font-weight="bold" text-anchor="start" textLength="59.7" lengthAdjust="spacingAndGlyphs" >Key = Space</text>
<polyline points="38.5,428 42.0,429.6333333333333 35.0,432.9 42.0,436.1666666666667 35.0,439.43333333333334 42.0,442.70000000000005 35.0,445.9666666666667 38.5,447.6" stroke="#1E1EDC" stroke-width="1" fill="none" />
<line x1="38.5" y1="447.6" x2="38.5" y2="456.6" stroke="#1E1EDC" stroke-width="1" />
<polyline points="38.5,456.5 38.5,476.5" stroke="#CC1028" stroke-width="1" fill="none" />
<line x1="38.5" y1="476" x2="38.5" y2="482" stroke="#000" stroke-width="1" />
<line x1="32.0" y1="482.5" x2="45.0" y2="482.5" stroke="#000" stroke-width="1" />
<line x1="34.0" y1="485.0" x2="43.0" y2="485.0" stroke="#000" stroke-width="1" />
<line x1="36.0" y1="487.5" x2="41.0" y2="487.5" stroke="#000" stroke-width="1" />
<text xml:space="preserve" x="9.8" y="445" font-family='"Liberation Sans", sans-serif' font-size="9.2" fill="#1E1EDC" font-weight="bold" text-anchor="start" textLength="11.5" lengthAdjust="spacingAndGlyphs" >R9</text>
<text xml:space="preserve" x="9.8" y="455.7" font-family='"Liberation Sans", sans-serif' font-size="9.2" fill="#1E1EDC" font-weight="bold" text-anchor="start" textLength="25.4" lengthAdjust="spacingAndGlyphs" >10kΩ</text>
<text xml:space="preserve" x="72.1" y="445" font-family='"Liberation Sans", sans-serif' font-size="9.6" fill="#303030" font-weight="normal" text-anchor="start" textLength="24.6" lengthAdjust="spacingAndGlyphs" stroke="#303030" stroke-width="0.3">X 1/2</text>
<text xml:space="preserve" x="72.1" y="464.8" font-family='"Liberation Sans", sans-serif' font-size="9.6" fill="#303030" font-weight="normal" text-anchor="start" textLength="26.5" lengthAdjust="spacingAndGlyphs" stroke="#303030" stroke-width="0.3">+6 dB</text>
<rect x="720.5" y="3.5" width="73" height="20" fill="#FFF" stroke="#000" stroke-width="1" rx="0" />
<rect x="723" y="6" width="45" height="14" fill="#D4D0D4" stroke="none" stroke-width="1" rx="0" />
<rect x="768" y="6" width="24" height="14" fill="#D8F6D8" stroke="none" stroke-width="1" rx="0" />
<path d="M727,17 C727,3 741,3 741,17" fill="none" stroke="#000" stroke-width="1"/>
<path d="M728,17 C730,9 738,9 740,17" fill="none" stroke="#000" stroke-width="1"/>
<text xml:space="preserve" x="747" y="1.5" font-family='"Liberation Sans", sans-serif' font-size="8" fill="#222" font-weight="bold" text-anchor="start" textLength="24" lengthAdjust="spacingAndGlyphs" >XSC1</text>
<rect x="828.5" y="9.5" width="20" height="20" fill="#E8E8E0" stroke="#000" stroke-width="1" rx="0" />
<text xml:space="preserve" x="847" y="6" font-family='"Liberation Sans", sans-serif' font-size="8" fill="#222" font-weight="bold" text-anchor="start" textLength="23" lengthAdjust="spacingAndGlyphs" >XBP1</text>
<rect x="419.5" y="186" width="94" height="122" fill="#FFFDBB" stroke="none" stroke-width="1" rx="0" />
<text xml:space="preserve" x="424" y="198.7" font-family='"Liberation Sans", sans-serif' font-size="11" fill="#000" font-weight="normal" text-anchor="start" >V: 1.66 mV</text>
<text xml:space="preserve" x="424" y="211.79999999999998" font-family='"Liberation Sans", sans-serif' font-size="11" fill="#000" font-weight="normal" text-anchor="start" >V(p-p): 10.2 mV</text>
<text xml:space="preserve" x="424" y="224.89999999999998" font-family='"Liberation Sans", sans-serif' font-size="11" fill="#000" font-weight="normal" text-anchor="start" >V(rms): 2.05 mV</text>
<text xml:space="preserve" x="424" y="238.0" font-family='"Liberation Sans", sans-serif' font-size="11" fill="#000" font-weight="normal" text-anchor="start" >V(dc): -878 uV</text>
<text xml:space="preserve" x="424" y="251.1" font-family='"Liberation Sans", sans-serif' font-size="11" fill="#000" font-weight="normal" text-anchor="start" >I: 164 nA</text>
<text xml:space="preserve" x="424" y="264.2" font-family='"Liberation Sans", sans-serif' font-size="11" fill="#000" font-weight="normal" text-anchor="start" >I(p-p): 1.01 uA</text>
<text xml:space="preserve" x="424" y="277.29999999999995" font-family='"Liberation Sans", sans-serif' font-size="11" fill="#000" font-weight="normal" text-anchor="start" >I(rms): 203 nA</text>
<text xml:space="preserve" x="424" y="290.4" font-family='"Liberation Sans", sans-serif' font-size="11" fill="#000" font-weight="normal" text-anchor="start" >I(dc): -86.9 nA</text>
<text xml:space="preserve" x="424" y="303.5" font-family='"Liberation Sans", sans-serif' font-size="11" fill="#000" font-weight="normal" text-anchor="start" >Freq.: 1.88 kHz</text>
<rect x="644" y="236" width="92" height="15" fill="#FFFDBB" stroke="none" stroke-width="1" rx="0" />
<text xml:space="preserve" x="648.6" y="247" font-family='"Liberation Sans", sans-serif' font-size="11" fill="#000" font-weight="normal" text-anchor="start" textLength="69" lengthAdjust="spacingAndGlyphs" >I(p-p): 102 uA</text>
<path d="M520,238 L520,24 Q520,17 527,17 L833,17 Q840,17 840,24 L840,238 Z" fill="#6585F0"/>
<path d="M520,47 L520,24 Q520,17 527,17 L833,17 Q840,17 840,24 L840,47 Z" fill="url(#tin)"/>
<rect x="520" y="234" width="320" height="4" fill="#5A6BEE" stroke="none" stroke-width="1" rx="0" />
<rect x="524" y="47" width="312" height="187" fill="#FFFFFB" stroke="none" stroke-width="1" rx="0" />
<text xml:space="preserve" x="528" y="38.6" font-family='"Liberation Sans", sans-serif' font-size="13" fill="#F4FFFF" font-weight="bold" text-anchor="start" textLength="155" lengthAdjust="spacingAndGlyphs" >Distortion Analyzer-XDA2</text>
<rect x="814.0" y="24.0" width="19.0" height="19.0" fill="url(#cin)" stroke="#E8D8F0" stroke-width="1" rx="3" />
<line x1="818.5" y1="28.5" x2="828.5" y2="38.5" stroke="#FFFFFF" stroke-width="2.2" />
<line x1="818.5" y1="38.5" x2="828.5" y2="28.5" stroke="#FFFFFF" stroke-width="2.2" />
<text xml:space="preserve" x="680" y="59" font-family='"Liberation Sans", sans-serif' font-size="11" fill="#000" font-weight="normal" text-anchor="middle" textLength="149" lengthAdjust="spacingAndGlyphs" >Total harmonic distortion (THD)</text>
<rect x="527" y="66" width="307" height="32" fill="#F4F2E8" stroke="none" stroke-width="1" rx="0" />
<rect x="527" y="66" width="302" height="28" fill="#000" stroke="none" stroke-width="1" rx="0" />
<line x1="527" y1="66.5" x2="833" y2="66.5" stroke="#A29E8A" stroke-width="1" />
<line x1="527.5" y1="66" x2="527.5" y2="98" stroke="#A29E8A" stroke-width="1" />
<line x1="833" y1="66" x2="833" y2="98" stroke="#A29E8A" stroke-width="1.5" />
<line x1="527" y1="97.5" x2="834" y2="97.5" stroke="#8E8A78" stroke-width="1.5" />
<text xml:space="preserve" x="689" y="83.5" font-family='"Liberation Sans", sans-serif' font-size="15" fill="#FFFFFF" font-weight="normal" text-anchor="middle" textLength="56" lengthAdjust="spacingAndGlyphs" >0.143 %</text>
<rect x="582.5" y="103.5" width="250" height="85" fill="none" stroke="#ECEAD2" stroke-width="1" rx="3" />
<rect x="531.5" y="117.5" width="40" height="22" fill="url(#btn)" stroke="#1D3B54" stroke-width="1" rx="3" />
<text xml:space="preserve" x="551.5" y="133" font-family='"Liberation Sans", sans-serif' font-size="11" fill="#000" font-weight="normal" text-anchor="middle" >Start</text>
<rect x="531.5" y="150.5" width="40" height="22.5" fill="url(#btn)" stroke="#1D3B54" stroke-width="1" rx="3" />
<text xml:space="preserve" x="551.5" y="166" font-family='"Liberation Sans", sans-serif' font-size="11" fill="#000" font-weight="normal" text-anchor="middle" >Stop</text>
<text xml:space="preserve" x="593.5" y="127.5" font-family='"Liberation Sans", sans-serif' font-size="11" fill="#000" font-weight="normal" text-anchor="start" textLength="89" lengthAdjust="spacingAndGlyphs" >Fundamental freq.</text>
<rect x="692.5" y="115.5" width="89" height="18" fill="#FFFFFF" stroke="#7F9DB9" stroke-width="1" rx="0" />
<rect x="781.5" y="115.5" width="40" height="18" fill="#FFFFFF" stroke="#7F9DB9" stroke-width="1" rx="0" />
<text xml:space="preserve" x="737" y="128.6" font-family='"Liberation Sans", sans-serif' font-size="11" fill="#000" font-weight="normal" text-anchor="middle" >1.079</text>
<text xml:space="preserve" x="786" y="128.6" font-family='"Liberation Sans", sans-serif' font-size="11" fill="#000" font-weight="normal" text-anchor="start" >kHz</text>
<text xml:space="preserve" x="605.6" y="160" font-family='"Liberation Sans", sans-serif' font-size="11" fill="#000" font-weight="normal" text-anchor="start" textLength="78" lengthAdjust="spacingAndGlyphs" >Resolution freq.</text>
<rect x="692.5" y="144.5" width="129" height="20" fill="#FFFFFF" stroke="#7F9DB9" stroke-width="1" rx="0" />
<text xml:space="preserve" x="697" y="159" font-family='"Liberation Sans", sans-serif' font-size="11" fill="#000" font-weight="normal" text-anchor="start" >107.9 Hz</text>
<rect x="805" y="147" width="16" height="15" fill="#C6DAF8" stroke="#B8CCF0" stroke-width="1" rx="1" />
<polyline points="809.5,152.5 813,156 816.5,152.5" stroke="#1B3A7A" stroke-width="2" fill="none" />
<line x1="692" y1="167.5" x2="822" y2="167.5" stroke="#B0AC98" stroke-width="1" />
<line x1="692.5" y1="167.5" x2="692.5" y2="184" stroke="#B0AC98" stroke-width="1" />
<text xml:space="preserve" x="756.5" y="179" font-family='"Liberation Sans", sans-serif' font-size="11" fill="#000" font-weight="normal" text-anchor="middle" >107.9 Hz</text>
<rect x="529.5" y="200.0" width="183" height="31.0" fill="none" stroke="#ECEAD2" stroke-width="1" rx="3" />
<rect x="535" y="194.5" width="44" height="9" fill="#FFFFFB" stroke="none" stroke-width="1" rx="0" />
<text xml:space="preserve" x="537" y="203.5" font-family='"Liberation Sans", sans-serif' font-size="11" fill="#1F3FBF" font-weight="normal" text-anchor="start" textLength="40" lengthAdjust="spacingAndGlyphs" >Controls</text>
<rect x="716.5" y="200.0" width="65.5" height="31.0" fill="none" stroke="#ECEAD2" stroke-width="1" rx="3" />
<rect x="722.7" y="194.5" width="38" height="9" fill="#FFFFFB" stroke="none" stroke-width="1" rx="0" />
<text xml:space="preserve" x="724.7" y="203.5" font-family='"Liberation Sans", sans-serif' font-size="11" fill="#1F3FBF" font-weight="normal" text-anchor="start" textLength="34" lengthAdjust="spacingAndGlyphs" >Display</text>
<rect x="537.5" y="209.0" width="53.5" height="16.5" fill="url(#btn)" stroke="#1D3B54" stroke-width="1" rx="3" />
<text xml:space="preserve" x="564.25" y="221.5" font-family='"Liberation Sans", sans-serif' font-size="11" fill="#000" font-weight="normal" text-anchor="middle" >THD</text>
<rect x="597.5" y="209.0" width="54" height="16.5" fill="url(#btn)" stroke="#1D3B54" stroke-width="1" rx="3" />
<text xml:space="preserve" x="624.5" y="221.5" font-family='"Liberation Sans", sans-serif' font-size="11" fill="#000" font-weight="normal" text-anchor="middle" >SINAD</text>
<rect x="657.5" y="209.0" width="53.5" height="16.5" fill="url(#btn)" stroke="#1D3B54" stroke-width="1" rx="3" />
<text xml:space="preserve" x="684.25" y="221.5" font-family='"Liberation Sans", sans-serif' font-size="11" fill="#000" font-weight="normal" text-anchor="middle" >Set...</text>
<rect x="720.5" y="209.0" width="24" height="16.5" fill="url(#btn)" stroke="#1D3B54" stroke-width="1" rx="3" />
<text xml:space="preserve" x="732.5" y="221.5" font-family='"Liberation Sans", sans-serif' font-size="11" fill="#000" font-weight="normal" text-anchor="middle" >%</text>
<rect x="750.5" y="209.0" width="24" height="16.5" fill="url(#btn)" stroke="#1D3B54" stroke-width="1" rx="3" />
<text xml:space="preserve" x="762.5" y="221.5" font-family='"Liberation Sans", sans-serif' font-size="11" fill="#000" font-weight="normal" text-anchor="middle" >dB</text>
<text xml:space="preserve" x="798" y="225" font-family='"Liberation Sans", sans-serif' font-size="11" fill="#000" font-weight="normal" text-anchor="start" >In</text>
<circle cx="816" cy="221" r="4.5" fill="none" stroke="#F2F0D6" stroke-width="1"/>
<circle cx="816" cy="221" r="1.6" fill="#C8C4B0"/>
<rect x="832" y="231" width="2" height="2" fill="#C8C4B0" stroke="none" stroke-width="1" rx="0" />
<rect x="829" y="231" width="2" height="2" fill="#C8C4B0" stroke="none" stroke-width="1" rx="0" />
<rect x="826" y="231" width="2" height="2" fill="#C8C4B0" stroke="none" stroke-width="1" rx="0" />
<rect x="832" y="228" width="2" height="2" fill="#C8C4B0" stroke="none" stroke-width="1" rx="0" />
<rect x="829" y="228" width="2" height="2" fill="#C8C4B0" stroke="none" stroke-width="1" rx="0" />
<rect x="832" y="225" width="2" height="2" fill="#C8C4B0" stroke="none" stroke-width="1" rx="0" />
<path d="M842.5,244.5 L842.5,12 Q842.5,5 849.5,5 L1049.5,5 Q1056.5,5 1056.5,12 L1056.5,244.5 Z" fill="#6585F0"/>
<path d="M842.5,35 L842.5,12 Q842.5,5 849.5,5 L1049.5,5 Q1056.5,5 1056.5,12 L1056.5,35 Z" fill="url(#tin)"/>
<rect x="842.5" y="240.5" width="214.0" height="4" fill="#5A6BEE" stroke="none" stroke-width="1" rx="0" />
<rect x="846.5" y="35" width="206.0" height="205.5" fill="#FFFFFB" stroke="none" stroke-width="1" rx="0" />
<text xml:space="preserve" x="850.5" y="26.6" font-family='"Liberation Sans", sans-serif' font-size="13" fill="#F4FFFF" font-weight="bold" text-anchor="start" textLength="158" lengthAdjust="spacingAndGlyphs" >Function Generator-XFG1</text>
<rect x="1031.0" y="11.5" width="19.5" height="19.5" fill="url(#cin)" stroke="#E8D8F0" stroke-width="1" rx="3" />
<line x1="1035.75" y1="16.25" x2="1045.75" y2="26.25" stroke="#FFFFFF" stroke-width="2.2" />
<line x1="1035.75" y1="26.25" x2="1045.75" y2="16.25" stroke="#FFFFFF" stroke-width="2.2" />
<rect x="851.0" y="43.0" width="195.0" height="30.5" fill="none" stroke="#ECEAD2" stroke-width="1" rx="3" />
<rect x="855.8" y="37.5" width="58" height="9" fill="#FFFFFB" stroke="none" stroke-width="1" rx="0" />
<text xml:space="preserve" x="857.8" y="46.5" font-family='"Liberation Sans", sans-serif' font-size="11" fill="#1F3FBF" font-weight="normal" text-anchor="start" textLength="54" lengthAdjust="spacingAndGlyphs" >Waveforms</text>
<rect x="859.5" y="52.5" width="58.5" height="17" fill="#FDFDF6" stroke="none" stroke-width="1" rx="0" />
<polyline points="859.5,69.5 859.5,52.5 918,52.5" stroke="#7D786A" stroke-width="2" fill="none" />
<path d="M867.2,61.2 C870,58.5 873,57.8 876,58.2 C881,59 885,63.5 889.3,63.5 C894,63.5 899,57.8 904,57.8 C907,57.8 910,59.5 911.5,61.5" stroke="#000" stroke-width="1.1" fill="none"/>
<polyline points="921.5,69 980.5,69 980.5,52" stroke="#7D786A" stroke-width="2" fill="none" />
<polyline points="928.2,63.7 938.2,58.4 947.8,63.7 956.6,58.4 966.4,63.7 972.7,60.3" stroke="#000" stroke-width="1.1" fill="none" />
<polyline points="982.5,69 1041.5,69 1041.5,52" stroke="#7D786A" stroke-width="2" fill="none" />
<polyline points="989,63.5 998.5,63.5 998.5,58.5 1007,58.5 1007,63.5 1015.5,63.5 1015.5,58.5 1025.5,58.5 1025.5,63.5 1033.5,63.5" stroke="#000" stroke-width="1.2" fill="none" />
<rect x="851.0" y="79.5" width="195.0" height="118" fill="none" stroke="#ECEAD2" stroke-width="1" rx="3" />
<rect x="855.8" y="74" width="70" height="9" fill="#FFFFFB" stroke="none" stroke-width="1" rx="0" />
<text xml:space="preserve" x="857.8" y="83" font-family='"Liberation Sans", sans-serif' font-size="11" fill="#1F3FBF" font-weight="normal" text-anchor="start" textLength="66" lengthAdjust="spacingAndGlyphs" >Signal options</text>
<rect x="925.5" y="88.5" width="118" height="77" fill="#FFFFFF" stroke="none" stroke-width="1" rx="0" />
<line x1="925.5" y1="88.5" x2="1043.5" y2="88.5" stroke="#7F9DB9" stroke-width="1.6" />
<line x1="925.5" y1="108" x2="1043.5" y2="108" stroke="#7F9DB9" stroke-width="1.6" />
<line x1="925.5" y1="127" x2="1043.5" y2="127" stroke="#7F9DB9" stroke-width="1.6" />
<line x1="925.5" y1="146.5" x2="1043.5" y2="146.5" stroke="#7F9DB9" stroke-width="1.6" />
<line x1="925.5" y1="165.5" x2="1043.5" y2="165.5" stroke="#7F9DB9" stroke-width="1.6" />
<line x1="925.5" y1="88.5" x2="925.5" y2="165.5" stroke="#7F9DB9" stroke-width="1.6" />
<line x1="1003.5" y1="88.5" x2="1003.5" y2="165.5" stroke="#7F9DB9" stroke-width="1.6" />
<line x1="1043.5" y1="88.5" x2="1043.5" y2="165.5" stroke="#7F9DB9" stroke-width="1.6" />
<text xml:space="preserve" x="861" y="101.4" font-family='"Liberation Sans", sans-serif' font-size="11" fill="#000" font-weight="normal" text-anchor="start" >Frequency:</text>
<text xml:space="preserve" x="932" y="101.4" font-family='"Liberation Sans", sans-serif' font-size="11" fill="#000" font-weight="normal" text-anchor="start" >1.079</text>
<text xml:space="preserve" x="1008" y="101.4" font-family='"Liberation Sans", sans-serif' font-size="11" fill="#000" font-weight="normal" text-anchor="start" >kHz</text>
<text xml:space="preserve" x="861" y="121.5" font-family='"Liberation Sans", sans-serif' font-size="11" fill="#000" font-weight="normal" text-anchor="start" >Duty cycle:</text>
<text xml:space="preserve" x="932" y="121.5" font-family='"Liberation Sans", sans-serif' font-size="11" fill="#B8B4A0" font-weight="normal" text-anchor="start" >50</text>
<text xml:space="preserve" x="1013" y="121.5" font-family='"Liberation Sans", sans-serif' font-size="11" fill="#B8B4A0" font-weight="normal" text-anchor="start" >%</text>
<text xml:space="preserve" x="861" y="141" font-family='"Liberation Sans", sans-serif' font-size="11" fill="#000" font-weight="normal" text-anchor="start" >Amplitude:</text>
<text xml:space="preserve" x="932" y="141" font-family='"Liberation Sans", sans-serif' font-size="11" fill="#000" font-weight="normal" text-anchor="start" >70</text>
<text xml:space="preserve" x="1008" y="141" font-family='"Liberation Sans", sans-serif' font-size="11" fill="#000" font-weight="normal" text-anchor="start" >mVp</text>
<text xml:space="preserve" x="861" y="160.8" font-family='"Liberation Sans", sans-serif' font-size="11" fill="#000" font-weight="normal" text-anchor="start" >Offset:</text>
<text xml:space="preserve" x="932" y="160.8" font-family='"Liberation Sans", sans-serif' font-size="11" fill="#000" font-weight="normal" text-anchor="start" >0</text>
<text xml:space="preserve" x="1013" y="160.8" font-family='"Liberation Sans", sans-serif' font-size="11" fill="#000" font-weight="normal" text-anchor="start" >V</text>
<rect x="887.0" y="173.0" width="120.0" height="18.5" fill="url(#btn)" stroke="#E2DECA" stroke-width="1" rx="3" />
<text xml:space="preserve" x="947.0" y="186" font-family='"Liberation Sans", sans-serif' font-size="11" fill="#B8B4A0" font-weight="normal" text-anchor="middle" textLength="79" lengthAdjust="spacingAndGlyphs" >Set rise/Fall time</text>
<text xml:space="preserve" x="874.5" y="219" font-family='"Liberation Sans", sans-serif' font-size="12" fill="#000" font-weight="normal" text-anchor="middle" >+</text>
<text xml:space="preserve" x="948" y="214.5" font-family='"Liberation Sans", sans-serif' font-size="11" fill="#000" font-weight="normal" text-anchor="middle" textLength="40.5" lengthAdjust="spacingAndGlyphs" >Common</text>
<line x1="1024" y1="217.5" x2="1030" y2="217.5" stroke="#000" stroke-width="1" />
<circle cx="872" cy="225" r="4.5" fill="none" stroke="#F2F0D6" stroke-width="1"/>
<circle cx="872" cy="225" r="1.6" fill="#C8C4B0"/>
<circle cx="943" cy="225" r="4.5" fill="none" stroke="#F2F0D6" stroke-width="1"/>
<circle cx="943" cy="225" r="1.6" fill="#C8C4B0"/>
<circle cx="1027" cy="229" r="5.5" fill="none" stroke="#F2F0D6" stroke-width="1"/>
<rect x="1050" y="238" width="2" height="2" fill="#C8C4B0" stroke="none" stroke-width="1" rx="0" />
<rect x="1047" y="238" width="2" height="2" fill="#C8C4B0" stroke="none" stroke-width="1" rx="0" />
<rect x="1044" y="238" width="2" height="2" fill="#C8C4B0" stroke="none" stroke-width="1" rx="0" />
<rect x="1050" y="235" width="2" height="2" fill="#C8C4B0" stroke="none" stroke-width="1" rx="0" />
<rect x="1047" y="235" width="2" height="2" fill="#C8C4B0" stroke="none" stroke-width="1" rx="0" />
<rect x="1050" y="232" width="2" height="2" fill="#C8C4B0" stroke="none" stroke-width="1" rx="0" />
<path d="M608,699 L608,258 Q608,251 615,251 L1083,251 Q1090,251 1090,258 L1090,699 Z" fill="#6585F0"/>
<path d="M608,281 L608,258 Q608,251 615,251 L1083,251 Q1090,251 1090,258 L1090,281 Z" fill="url(#tin)"/>
<rect x="608" y="695" width="482" height="4" fill="#5A6BEE" stroke="none" stroke-width="1" rx="0" />
<rect x="612" y="281" width="474" height="414" fill="#FFFFFB" stroke="none" stroke-width="1" rx="0" />
<text xml:space="preserve" x="616" y="272.6" font-family='"Liberation Sans", sans-serif' font-size="13" fill="#F4FFFF" font-weight="bold" text-anchor="start" textLength="112" lengthAdjust="spacingAndGlyphs" >Oscilloscope-XSC1</text>
<rect x="612" y="281" width="450" height="251" fill="#FFFFFF" stroke="none" stroke-width="1" rx="0" />
<line x1="612" y1="281.5" x2="1062" y2="281.5" stroke="#000" stroke-width="1" />
<line x1="612.5" y1="281" x2="612.5" y2="532" stroke="#000" stroke-width="1" />
<line x1="613" y1="282.7" x2="1062" y2="282.7" stroke="#9EA496" stroke-width="1.2" />
<line x1="613.8" y1="282" x2="613.8" y2="531" stroke="#9EA496" stroke-width="1.2" />
<line x1="612" y1="531.5" x2="1062" y2="531.5" stroke="#000" stroke-width="1" />
<g stroke="#A8A8A8" stroke-width="1" stroke-dasharray="3,3">
<line x1="676.5" y1="293" x2="676.5" y2="520" stroke="#A8A8A8" stroke-width="1" />
<line x1="729.5" y1="293" x2="729.5" y2="520" stroke="#A8A8A8" stroke-width="1" />
<line x1="782.5" y1="293" x2="782.5" y2="520" stroke="#A8A8A8" stroke-width="1" />
<line x1="835.5" y1="293" x2="835.5" y2="520" stroke="#A8A8A8" stroke-width="1" />
<line x1="888.5" y1="293" x2="888.5" y2="520" stroke="#A8A8A8" stroke-width="1" />
<line x1="940.5" y1="293" x2="940.5" y2="520" stroke="#A8A8A8" stroke-width="1" />
<line x1="993.5" y1="293" x2="993.5" y2="520" stroke="#A8A8A8" stroke-width="1" />
<line x1="1046.5" y1="293" x2="1046.5" y2="520" stroke="#A8A8A8" stroke-width="1" />
<line x1="624" y1="330.5" x2="1062" y2="330.5" stroke="#A8A8A8" stroke-width="1" />
<line x1="624" y1="368.5" x2="1062" y2="368.5" stroke="#A8A8A8" stroke-width="1" />
<line x1="624" y1="444.5" x2="1062" y2="444.5" stroke="#A8A8A8" stroke-width="1" />
<line x1="624" y1="482.5" x2="1062" y2="482.5" stroke="#A8A8A8" stroke-width="1" />
</g>
<line x1="623.5" y1="292" x2="623.5" y2="521" stroke="#000" stroke-width="1" />
<line x1="623" y1="292.5" x2="1062" y2="292.5" stroke="#000" stroke-width="1" />
<line x1="623" y1="520.5" x2="1062" y2="520.5" stroke="#000" stroke-width="1" />
<line x1="623" y1="406.5" x2="1062" y2="406.5" stroke="#000" stroke-width="1" />
<line x1="624.5" y1="406" x2="624.5" y2="409.5" stroke="#000" stroke-width="1" />
<line x1="634.5" y1="406" x2="634.5" y2="409.5" stroke="#000" stroke-width="1" />
<line x1="645.5" y1="406" x2="645.5" y2="409.5" stroke="#000" stroke-width="1" />
<line x1="655.5" y1="406" x2="655.5" y2="409.5" stroke="#000" stroke-width="1" />
<line x1="666.5" y1="406" x2="666.5" y2="409.5" stroke="#000" stroke-width="1" />
<line x1="676.5" y1="406" x2="676.5" y2="409.5" stroke="#000" stroke-width="1" />
<line x1="687.5" y1="406" x2="687.5" y2="409.5" stroke="#000" stroke-width="1" />
<line x1="697.5" y1="406" x2="697.5" y2="409.5" stroke="#000" stroke-width="1" />
<line x1="708.5" y1="406" x2="708.5" y2="409.5" stroke="#000" stroke-width="1" />
<line x1="719.5" y1="406" x2="719.5" y2="409.5" stroke="#000" stroke-width="1" />
<line x1="729.5" y1="406" x2="729.5" y2="409.5" stroke="#000" stroke-width="1" />
<line x1="740.5" y1="406" x2="740.5" y2="409.5" stroke="#000" stroke-width="1" />
<line x1="750.5" y1="406" x2="750.5" y2="409.5" stroke="#000" stroke-width="1" />
<line x1="761.5" y1="406" x2="761.5" y2="409.5" stroke="#000" stroke-width="1" />
<line x1="771.5" y1="406" x2="771.5" y2="409.5" stroke="#000" stroke-width="1" />
<line x1="782.5" y1="406" x2="782.5" y2="409.5" stroke="#000" stroke-width="1" />
<line x1="792.5" y1="406" x2="792.5" y2="409.5" stroke="#000" stroke-width="1" />
<line x1="803.5" y1="406" x2="803.5" y2="409.5" stroke="#000" stroke-width="1" />
<line x1="814.5" y1="406" x2="814.5" y2="409.5" stroke="#000" stroke-width="1" />
<line x1="824.5" y1="406" x2="824.5" y2="409.5" stroke="#000" stroke-width="1" />
<line x1="835.5" y1="406" x2="835.5" y2="409.5" stroke="#000" stroke-width="1" />
<line x1="845.5" y1="406" x2="845.5" y2="409.5" stroke="#000" stroke-width="1" />
<line x1="856.5" y1="406" x2="856.5" y2="409.5" stroke="#000" stroke-width="1" />
<line x1="866.5" y1="406" x2="866.5" y2="409.5" stroke="#000" stroke-width="1" />
<line x1="877.5" y1="406" x2="877.5" y2="409.5" stroke="#000" stroke-width="1" />
<line x1="888.5" y1="406" x2="888.5" y2="409.5" stroke="#000" stroke-width="1" />
<line x1="898.5" y1="406" x2="898.5" y2="409.5" stroke="#000" stroke-width="1" />
<line x1="909.5" y1="406" x2="909.5" y2="409.5" stroke="#000" stroke-width="1" />
<line x1="919.5" y1="406" x2="919.5" y2="409.5" stroke="#000" stroke-width="1" />
<line x1="930.5" y1="406" x2="930.5" y2="409.5" stroke="#000" stroke-width="1" />
<line x1="940.5" y1="406" x2="940.5" y2="409.5" stroke="#000" stroke-width="1" />
<line x1="951.5" y1="406" x2="951.5" y2="409.5" stroke="#000" stroke-width="1" />
<line x1="961.5" y1="406" x2="961.5" y2="409.5" stroke="#000" stroke-width="1" />
<line x1="972.5" y1="406" x2="972.5" y2="409.5" stroke="#000" stroke-width="1" />
<line x1="983.5" y1="406" x2="983.5" y2="409.5" stroke="#000" stroke-width="1" />
<line x1="993.5" y1="406" x2="993.5" y2="409.5" stroke="#000" stroke-width="1" />
<line x1="1004.5" y1="406" x2="1004.5" y2="409.5" stroke="#000" stroke-width="1" />
<line x1="1014.5" y1="406" x2="1014.5" y2="409.5" stroke="#000" stroke-width="1" />
<line x1="1025.5" y1="406" x2="1025.5" y2="409.5" stroke="#000" stroke-width="1" />
<line x1="1035.5" y1="406" x2="1035.5" y2="409.5" stroke="#000" stroke-width="1" />
<line x1="1046.5" y1="406" x2="1046.5" y2="409.5" stroke="#000" stroke-width="1" />
<line x1="1056.5" y1="406" x2="1056.5" y2="409.5" stroke="#000" stroke-width="1" />
<polyline points="623.5,504.64 624.5,504.88 625.5,505.04 626.5,505.1 627.5,505.07 628.5,504.95 629.5,504.75 630.5,504.45 631.5,504.07 632.5,503.6 633.5,503.05 634.5,502.41 635.5,501.7 636.5,500.91 637.5,500.04 638.5,499.11 639.5,498.11 640.5,497.05 641.5,495.94 642.5,494.77 643.5,493.56 644.5,492.3 645.5,491.0 646.5,489.68 647.5,488.33 648.5,486.95 649.5,485.57 650.5,484.17 651.5,482.77 652.5,481.37 653.5,479.98 654.5,478.61 655.5,477.26 656.5,475.93 657.5,474.63 658.5,473.37 659.5,472.15 660.5,470.98 661.5,469.85 662.5,468.79 663.5,467.79 664.5,466.85 665.5,465.98 666.5,465.18 667.5,464.46 668.5,463.81 669.5,463.25 670.5,462.78 671.5,462.38 672.5,462.08 673.5,461.86 674.5,461.74 675.5,461.7 676.5,461.75 677.5,461.9 678.5,462.13 679.5,462.45 680.5,462.86 681.5,463.36 682.5,463.94 683.5,464.6 684.5,465.33 685.5,466.15 686.5,467.03 687.5,467.98 688.5,469.0 689.5,470.07 690.5,471.21 691.5,472.39 692.5,473.62 693.5,474.89 694.5,476.19 695.5,477.52 696.5,478.88 697.5,480.26 698.5,481.65 699.5,483.05 700.5,484.45 701.5,485.84 702.5,487.23 703.5,488.6 704.5,489.95 705.5,491.27 706.5,492.55 707.5,493.8 708.5,495.01 709.5,496.17 710.5,497.27 711.5,498.32 712.5,499.3 713.5,500.22 714.5,501.07 715.5,501.85 716.5,502.54 717.5,503.16 718.5,503.7 719.5,504.15 720.5,504.52 721.5,504.8 722.5,504.98 723.5,505.08 724.5,505.09 725.5,505.01 726.5,504.84 727.5,504.58 728.5,504.23 729.5,503.8 730.5,503.28 731.5,502.67 732.5,501.99 733.5,501.23 734.5,500.4 735.5,499.49 736.5,498.52 737.5,497.49 738.5,496.39 739.5,495.24 740.5,494.05 741.5,492.81 742.5,491.53 743.5,490.21 744.5,488.87 745.5,487.5 746.5,486.12 747.5,484.73 748.5,483.33 749.5,481.93 750.5,480.54 751.5,479.16 752.5,477.79 753.5,476.46 754.5,475.14 755.5,473.87 756.5,472.63 757.5,471.44 758.5,470.3 759.5,469.21 760.5,468.18 761.5,467.21 762.5,466.32 763.5,465.49 764.5,464.74 765.5,464.06 766.5,463.47 767.5,462.96 768.5,462.53 769.5,462.19 770.5,461.94 771.5,461.78 772.5,461.7 773.5,461.72 774.5,461.83 775.5,462.03 776.5,462.32 777.5,462.69 778.5,463.15 779.5,463.7 780.5,464.32 781.5,465.03 782.5,465.81 783.5,466.67 784.5,467.59 785.5,468.58 786.5,469.64 787.5,470.75 788.5,471.91 789.5,473.12 790.5,474.37 791.5,475.66 792.5,476.99 793.5,478.34 794.5,479.71 795.5,481.09 796.5,482.49 797.5,483.89 798.5,485.29 799.5,486.68 800.5,488.05 801.5,489.41 802.5,490.74 803.5,492.04 804.5,493.31 805.5,494.53 806.5,495.71 807.5,496.84 808.5,497.91 809.5,498.92 810.5,499.86 811.5,500.74 812.5,501.54 813.5,502.27 814.5,502.92 815.5,503.49 816.5,503.98 817.5,504.38 818.5,504.69 819.5,504.92 820.5,505.05 821.5,505.1 822.5,505.05 823.5,504.92 824.5,504.69 825.5,504.38 826.5,503.98 827.5,503.49 828.5,502.92 829.5,502.27 830.5,501.54 831.5,500.74 832.5,499.86 833.5,498.92 834.5,497.91 835.5,496.84 836.5,495.71 837.5,494.53 838.5,493.31 839.5,492.04 840.5,490.74 841.5,489.41 842.5,488.05 843.5,486.68 844.5,485.29 845.5,483.89 846.5,482.49 847.5,481.09 848.5,479.71 849.5,478.34 850.5,476.99 851.5,475.66 852.5,474.37 853.5,473.12 854.5,471.91 855.5,470.75 856.5,469.64 857.5,468.58 858.5,467.59 859.5,466.67 860.5,465.81 861.5,465.03 862.5,464.32 863.5,463.7 864.5,463.15 865.5,462.69 866.5,462.32 867.5,462.03 868.5,461.83 869.5,461.72 870.5,461.7 871.5,461.78 872.5,461.94 873.5,462.19 874.5,462.53 875.5,462.96 876.5,463.47 877.5,464.06" stroke="#E08C22" stroke-width="1" fill="none" />
<polyline points="623.5,406.5 629.35,406.47 637.92,406.4 647.48,406.36 656.25,406.37 662.5,406.5 665.7,406.6 667.02,406.63 667.24,406.81 667.14,407.36 667.5,408.5 668.3,410.8 669.01,414.11 669.67,417.57 670.32,420.32 671.0,421.5 671.69,420.93 672.38,419.2 673.06,416.54 673.77,413.23 674.5,409.5 675.27,404.38 676.06,397.69 676.88,390.91 677.69,385.52 678.5,383.0 679.32,384.28 680.17,388.37 681.01,393.87 681.8,399.38 682.5,403.5 683.08,406.15 683.56,408.26 684.0,409.96 684.46,411.33 685.0,412.5 685.6,413.44 686.21,414.09 686.87,414.47 687.62,414.6 688.5,414.5 689.52,414.08 690.67,413.33 691.91,412.39 693.2,411.4 694.5,410.5 695.0,409.64 694.71,408.71 694.87,407.81 696.72,407.04 701.5,406.5 710.91,406.21 724.14,406.12 738.6,406.16 751.75,406.31 761.0,406.5 765.51,406.6 767.0,406.63 766.72,406.81 765.97,407.36 766.0,408.5 766.8,410.8 767.51,414.11 768.17,417.57 768.82,420.32 769.5,421.5 770.19,420.93 770.88,419.2 771.56,416.54 772.27,413.23 773.0,409.5 773.77,404.38 774.56,397.69 775.38,390.91 776.19,385.52 777.0,383.0 777.82,384.28 778.67,388.37 779.51,393.87 780.3,399.38 781.0,403.5 781.58,406.15 782.06,408.26 782.5,409.96 782.96,411.33 783.5,412.5 784.1,413.44 784.71,414.09 785.37,414.47 786.12,414.6 787.0,414.5 788.02,414.08 789.17,413.33 790.41,412.39 791.7,411.4 793.0,410.5 793.51,409.64 793.25,408.71 793.44,407.81 795.28,407.04 800.0,406.5 809.28,406.21 822.3,406.12 836.54,406.16 849.48,406.31 858.6,406.5 863.05,406.6 864.53,406.63 864.28,406.81 863.55,407.36 863.6,408.5 864.4,410.8 865.11,414.11 865.77,417.57 866.42,420.32 867.1,421.5 867.79,420.93 868.48,419.2 869.16,416.54 869.87,413.23 870.6,409.5 871.37,404.38 872.16,397.69 872.98,390.91 873.79,385.52 874.6,383.0 875.46,384.42 876.39,388.8 877.29,394.52 878.06,399.96 878.6,403.5 880,399" stroke="#C8102E" stroke-width="1.2" fill="none" />
<line x1="764.5" y1="283" x2="764.5" y2="520" stroke="#E01010" stroke-width="1" />
<line x1="782.5" y1="286" x2="782.5" y2="520" stroke="#1010C0" stroke-width="1" />
<polygon points="755.5,283 773.8,283 764.4,292" stroke="none" stroke-width="1" fill="#F01010" />
<text xml:space="preserve" x="764.5" y="289.5" font-family='"Liberation Sans", sans-serif' font-size="8" fill="#FFF" font-weight="bold" text-anchor="middle" >1</text>
<polygon points="776,286 789,286 782.4,292" stroke="none" stroke-width="1" fill="#1010D0" />
<text xml:space="preserve" x="782.4" y="291" font-family='"Liberation Sans", sans-serif' font-size="6" fill="#FFF" font-weight="bold" text-anchor="middle" >2</text>
<circle cx="764.5" cy="464" r="3" fill="#FFF" stroke="#E01010" stroke-width="1.2"/>
<circle cx="782.5" cy="466" r="3" fill="#FFF" stroke="#1010C0" stroke-width="1.2"/>
<circle cx="764.5" cy="406.5" r="2" fill="none" stroke="#C8102E" stroke-width="1"/>
<rect x="613.5" y="534.5" width="15" height="10" fill="#D6E6FA" stroke="#E4EEFA" stroke-width="1" rx="1" />
<polygon points="618,539.5 622,536.5 622,542.5" stroke="none" stroke-width="1" fill="#1E3C8C" />
<line x1="614" y1="545.5" x2="628" y2="545.5" stroke="#8AA0C8" stroke-width="1" />
<rect x="613.5" y="549.5" width="57" height="58" fill="none" stroke="#D0CCB8" stroke-width="1" rx="1" />
<text xml:space="preserve" x="618" y="567.2" font-family='"Liberation Sans", sans-serif' font-size="10.5" fill="#000" font-weight="normal" text-anchor="start" >T1</text>
<text xml:space="preserve" x="618" y="581.8" font-family='"Liberation Sans", sans-serif' font-size="10.5" fill="#000" font-weight="normal" text-anchor="start" >T2</text>
<text xml:space="preserve" x="618" y="601.2" font-family='"Liberation Sans", sans-serif' font-size="10.5" fill="#000" font-weight="normal" text-anchor="start" textLength="27" lengthAdjust="spacingAndGlyphs" >T2-T1</text>
<rect x="637" y="555" width="15" height="17" fill="#FDFDF6" stroke="none" stroke-width="1" rx="0" />
<line x1="651.5" y1="555" x2="651.5" y2="572" stroke="#8E8A78" stroke-width="1.5" />
<line x1="637" y1="571.5" x2="652" y2="571.5" stroke="#C0BCA8" stroke-width="1.5" />
<polygon points="639,563.5 644,559.0 644,562.0 649,562.0 649,565.0 644,565.0 644,568.0" stroke="none" stroke-width="1" fill="#000" />
<rect x="654" y="555" width="15" height="17" fill="#FDFDF6" stroke="none" stroke-width="1" rx="0" />
<line x1="668.5" y1="555" x2="668.5" y2="572" stroke="#8E8A78" stroke-width="1.5" />
<line x1="654" y1="571.5" x2="669" y2="571.5" stroke="#C0BCA8" stroke-width="1.5" />
<polygon points="666,563.5 661,559.0 661,562.0 656,562.0 656,565.0 661,565.0 661,568.0" stroke="none" stroke-width="1" fill="#000" />
<rect x="637" y="573" width="15" height="17" fill="#FDFDF6" stroke="none" stroke-width="1" rx="0" />
<line x1="651.5" y1="573" x2="651.5" y2="590" stroke="#8E8A78" stroke-width="1.5" />
<line x1="637" y1="589.5" x2="652" y2="589.5" stroke="#C0BCA8" stroke-width="1.5" />
<polygon points="639,581.5 644,577.0 644,580.0 649,580.0 649,583.0 644,583.0 644,586.0" stroke="none" stroke-width="1" fill="#000" />
<rect x="654" y="573" width="15" height="17" fill="#FDFDF6" stroke="none" stroke-width="1" rx="0" />
<line x1="668.5" y1="573" x2="668.5" y2="590" stroke="#8E8A78" stroke-width="1.5" />
<line x1="654" y1="589.5" x2="669" y2="589.5" stroke="#C0BCA8" stroke-width="1.5" />
<polygon points="666,581.5 661,577.0 661,580.0 656,580.0 656,583.0 661,583.0 661,586.0" stroke="none" stroke-width="1" fill="#000" />
<rect x="673" y="551" width="330" height="57" fill="#FFFFFF" stroke="none" stroke-width="1" rx="0" />
<line x1="672.5" y1="550" x2="672.5" y2="608" stroke="#8C887A" stroke-width="1.5" />
<line x1="672" y1="550" x2="994" y2="550" stroke="#8C887A" stroke-width="1.5" />
<text xml:space="preserve" x="708.5" y="561.8" font-family='"Liberation Sans", sans-serif' font-size="10.5" fill="#000" font-weight="normal" text-anchor="middle" >Time</text>
<text xml:space="preserve" x="787.5" y="561.8" font-family='"Liberation Sans", sans-serif' font-size="10.5" fill="#000" font-weight="normal" text-anchor="middle" >Channel_A</text>
<text xml:space="preserve" x="867.5" y="561.8" font-family='"Liberation Sans", sans-serif' font-size="10.5" fill="#000" font-weight="normal" text-anchor="middle" >Channel_B</text>
<text xml:space="preserve" x="708.5" y="575" font-family='"Liberation Sans", sans-serif' font-size="10.5" fill="#000" font-weight="normal" text-anchor="middle" >73.375 ms</text>
<text xml:space="preserve" x="787.5" y="575" font-family='"Liberation Sans", sans-serif' font-size="10.5" fill="#000" font-weight="normal" text-anchor="middle" >5.027 V</text>
<text xml:space="preserve" x="867.5" y="575" font-family='"Liberation Sans", sans-serif' font-size="10.5" fill="#000" font-weight="normal" text-anchor="middle" >-1.146 mV</text>
<text xml:space="preserve" x="708.5" y="587.6" font-family='"Liberation Sans", sans-serif' font-size="10.5" fill="#000" font-weight="normal" text-anchor="middle" >73.546 ms</text>
<text xml:space="preserve" x="787.5" y="587.6" font-family='"Liberation Sans", sans-serif' font-size="10.5" fill="#000" font-weight="normal" text-anchor="middle" >4.504 V</text>
<text xml:space="preserve" x="867.5" y="587.6" font-family='"Liberation Sans", sans-serif' font-size="10.5" fill="#000" font-weight="normal" text-anchor="middle" >163.718 uV</text>
<text xml:space="preserve" x="708.5" y="600" font-family='"Liberation Sans", sans-serif' font-size="10.5" fill="#000" font-weight="normal" text-anchor="middle" >170.455 us</text>
<text xml:space="preserve" x="787.5" y="600" font-family='"Liberation Sans", sans-serif' font-size="10.5" fill="#000" font-weight="normal" text-anchor="middle" >-522.318 mV</text>
<text xml:space="preserve" x="867.5" y="600" font-family='"Liberation Sans", sans-serif' font-size="10.5" fill="#000" font-weight="normal" text-anchor="middle" >1.310 mV</text>
<rect x="1004.0" y="556.5" width="70.5" height="19.5" fill="url(#btn)" stroke="#1D3B54" stroke-width="1" rx="3" />
<text xml:space="preserve" x="1012" y="571" font-family='"Liberation Sans", sans-serif' font-size="11" fill="#000" font-weight="normal" text-anchor="start" >Reverse</text>
<rect x="1004.0" y="584.5" width="70.5" height="20" fill="url(#btn)" stroke="#1D3B54" stroke-width="1" rx="3" />
<text xml:space="preserve" x="1020" y="599" font-family='"Liberation Sans", sans-serif' font-size="11" fill="#000" font-weight="normal" text-anchor="start" >Save</text>
<rect x="615.0" y="622.0" width="128.0" height="72.5" fill="none" stroke="#ECEAD2" stroke-width="1" rx="3" />
<rect x="619.6" y="616.5" width="47.6" height="9" fill="#FFFFFB" stroke="none" stroke-width="1" rx="0" />
<text xml:space="preserve" x="621.6" y="625.5" font-family='"Liberation Sans", sans-serif' font-size="10.5" fill="#1F3FBF" font-weight="normal" text-anchor="start" textLength="43.6" lengthAdjust="spacingAndGlyphs" >Timebase</text>
<text xml:space="preserve" x="614.7" y="643.6" font-family='"Liberation Sans", sans-serif' font-size="10.5" fill="#000" font-weight="normal" text-anchor="start" >Scale:</text>
<rect x="651.5" y="628.5" width="86" height="19" fill="#FFFFFF" stroke="#7F9DB9" stroke-width="1" rx="0" />
<text xml:space="preserve" x="657" y="642" font-family='"Liberation Sans", sans-serif' font-size="10.5" fill="#000" font-weight="normal" text-anchor="start" >500 us/Div</text>
<text xml:space="preserve" x="614.7" y="663.6" font-family='"Liberation Sans", sans-serif' font-size="10.5" fill="#000" font-weight="normal" text-anchor="start" >X pos.(Div):</text>
<rect x="676.5" y="650.0" width="61" height="18.5" fill="#FFFFFF" stroke="#7F9DB9" stroke-width="1" rx="0" />
<text xml:space="preserve" x="682" y="663" font-family='"Liberation Sans", sans-serif' font-size="10.5" fill="#000" font-weight="normal" text-anchor="start" >0</text>
<rect x="620.5" y="673.5" width="22.5" height="17" fill="url(#btn)" stroke="#1D3B54" stroke-width="1" rx="3" />
<text xml:space="preserve" x="631.75" y="686.5" font-family='"Liberation Sans", sans-serif' font-size="10.5" fill="#000" font-weight="normal" text-anchor="middle" >Y/T</text>
<rect x="646.5" y="673.5" width="25" height="17" fill="url(#btn)" stroke="#1D3B54" stroke-width="1" rx="3" />
<text xml:space="preserve" x="659.0" y="686.5" font-family='"Liberation Sans", sans-serif' font-size="10.5" fill="#000" font-weight="normal" text-anchor="middle" >Add</text>
<rect x="676.5" y="673.5" width="25" height="17" fill="url(#btn)" stroke="#1D3B54" stroke-width="1" rx="3" />
<text xml:space="preserve" x="689.0" y="686.5" font-family='"Liberation Sans", sans-serif' font-size="10.5" fill="#000" font-weight="normal" text-anchor="middle" >B/A</text>
<rect x="704.5" y="673.5" width="26.5" height="17" fill="url(#btn)" stroke="#1D3B54" stroke-width="1" rx="3" />
<text xml:space="preserve" x="717.75" y="686.5" font-family='"Liberation Sans", sans-serif' font-size="10.5" fill="#000" font-weight="normal" text-anchor="middle" >A/B</text>
<rect x="745.0" y="622.0" width="127.5" height="72.5" fill="none" stroke="#ECEAD2" stroke-width="1" rx="3" />
<rect x="750.8" y="616.5" width="52" height="9" fill="#FFFFFB" stroke="none" stroke-width="1" rx="0" />
<text xml:space="preserve" x="752.8" y="625.5" font-family='"Liberation Sans", sans-serif' font-size="10.5" fill="#1F3FBF" font-weight="normal" text-anchor="start" textLength="48" lengthAdjust="spacingAndGlyphs" >Channel A</text>
<text xml:space="preserve" x="746.8" y="643" font-family='"Liberation Sans", sans-serif' font-size="10.5" fill="#000" font-weight="normal" text-anchor="start" >Scale:</text>
<rect x="783.5" y="628.5" width="86" height="19" fill="#FFFFFF" stroke="#7F9DB9" stroke-width="1" rx="0" />
<text xml:space="preserve" x="790" y="642" font-family='"Liberation Sans", sans-serif' font-size="10.5" fill="#000" font-weight="normal" text-anchor="start" >10  V/Div</text>
<text xml:space="preserve" x="746.8" y="662.5" font-family='"Liberation Sans", sans-serif' font-size="10.5" fill="#000" font-weight="normal" text-anchor="start" >Y pos.(Div):</text>
<rect x="808.5" y="650.0" width="61" height="18.5" fill="#FFFFFF" stroke="#7F9DB9" stroke-width="1" rx="0" />
<text xml:space="preserve" x="814" y="663" font-family='"Liberation Sans", sans-serif' font-size="10.5" fill="#000" font-weight="normal" text-anchor="start" >-2</text>
<rect x="748.5" y="673.5" width="22" height="17" fill="url(#btn)" stroke="#1D3B54" stroke-width="1" rx="3" />
<text xml:space="preserve" x="759.5" y="686.5" font-family='"Liberation Sans", sans-serif' font-size="10.5" fill="#000" font-weight="normal" text-anchor="middle" >AC</text>
<rect x="773.5" y="673.5" width="23.5" height="17" fill="url(#btn)" stroke="#1D3B54" stroke-width="1" rx="3" />
<text xml:space="preserve" x="785.25" y="686.5" font-family='"Liberation Sans", sans-serif' font-size="10.5" fill="#000" font-weight="normal" text-anchor="middle" >0</text>
<rect x="800.5" y="673.5" width="24" height="17" fill="url(#btn)" stroke="#1D3B54" stroke-width="1" rx="3" />
<text xml:space="preserve" x="812.5" y="686.5" font-family='"Liberation Sans", sans-serif' font-size="10.5" fill="#000" font-weight="normal" text-anchor="middle" >DC</text>
<circle cx="858.5" cy="680" r="5.5" fill="none" stroke="#F2F0D6" stroke-width="1"/>
<circle cx="858.5" cy="680" r="1.6" fill="#C8C4B0"/>
<rect x="874.5" y="622.0" width="127" height="72.5" fill="none" stroke="#ECEAD2" stroke-width="1" rx="3" />
<rect x="879.8" y="616.5" width="51.5" height="9" fill="#FFFFFB" stroke="none" stroke-width="1" rx="0" />
<text xml:space="preserve" x="881.8" y="625.5" font-family='"Liberation Sans", sans-serif' font-size="10.5" fill="#1F3FBF" font-weight="normal" text-anchor="start" textLength="47.5" lengthAdjust="spacingAndGlyphs" >Channel B</text>
<text xml:space="preserve" x="875.8" y="643.5" font-family='"Liberation Sans", sans-serif' font-size="10.5" fill="#000" font-weight="normal" text-anchor="start" >Scale:</text>
<rect x="913.5" y="628.5" width="86" height="19" fill="#FFFFFF" stroke="#7F9DB9" stroke-width="1" rx="0" />
<text xml:space="preserve" x="920" y="642" font-family='"Liberation Sans", sans-serif' font-size="10.5" fill="#000" font-weight="normal" text-anchor="start" >10 mV/Div</text>
<text xml:space="preserve" x="875.8" y="662.5" font-family='"Liberation Sans", sans-serif' font-size="10.5" fill="#000" font-weight="normal" text-anchor="start" >Y pos.(Div):</text>
<rect x="939.5" y="650.0" width="60" height="18.5" fill="#FFFFFF" stroke="#7F9DB9" stroke-width="1" rx="0" />
<text xml:space="preserve" x="946" y="663" font-family='"Liberation Sans", sans-serif' font-size="10.5" fill="#000" font-weight="normal" text-anchor="start" >0</text>
<rect x="878.5" y="675.5" width="20.5" height="15.5" fill="url(#btn)" stroke="#1D3B54" stroke-width="1" rx="3" />
<text xml:space="preserve" x="888.75" y="688" font-family='"Liberation Sans", sans-serif' font-size="10.5" fill="#000" font-weight="normal" text-anchor="middle" >AC</text>
<rect x="902.5" y="675.5" width="20.5" height="15.5" fill="url(#btn)" stroke="#1D3B54" stroke-width="1" rx="3" />
<text xml:space="preserve" x="912.75" y="688" font-family='"Liberation Sans", sans-serif' font-size="10.5" fill="#000" font-weight="normal" text-anchor="middle" >0</text>
<rect x="926.5" y="675.5" width="23.5" height="15.5" fill="url(#btn)" stroke="#1D3B54" stroke-width="1" rx="3" />
<text xml:space="preserve" x="938.25" y="688" font-family='"Liberation Sans", sans-serif' font-size="10.5" fill="#000" font-weight="normal" text-anchor="middle" >DC</text>
<rect x="953.5" y="675.5" width="16.5" height="15.5" fill="url(#btn)" stroke="#1D3B54" stroke-width="1" rx="3" />
<text xml:space="preserve" x="961.75" y="688" font-family='"Liberation Sans", sans-serif' font-size="10.5" fill="#000" font-weight="normal" text-anchor="middle" >-</text>
<circle cx="993" cy="682" r="5.5" fill="none" stroke="#F2F0D6" stroke-width="1"/>
<circle cx="993" cy="682" r="1.6" fill="#C8C4B0"/>
<rect x="1005.0" y="622.0" width="74.5" height="72.5" fill="none" stroke="#ECEAD2" stroke-width="1" rx="3" />
<rect x="1010" y="616.5" width="36.5" height="9" fill="#FFFFFB" stroke="none" stroke-width="1" rx="0" />
<text xml:space="preserve" x="1012" y="625.5" font-family='"Liberation Sans", sans-serif' font-size="10.5" fill="#1F3FBF" font-weight="normal" text-anchor="start" textLength="32.5" lengthAdjust="spacingAndGlyphs" >Trigger</text>
<text xml:space="preserve" x="1007.8" y="643.5" font-family='"Liberation Sans", sans-serif' font-size="10.5" fill="#000" font-weight="normal" text-anchor="start" >Edge:</text>
<rect x="1051.5" y="632.5" width="15" height="16" fill="#FDFDF6" stroke="none" stroke-width="1" rx="0" />
<line x1="1052" y1="632.5" x2="1066" y2="632.5" stroke="#8C887A" stroke-width="1.2" />
<line x1="1052" y1="632" x2="1052" y2="649" stroke="#8C887A" stroke-width="1.2" />
<polyline points="1055,645 1058,645 1058,637 1062,637" stroke="#000" stroke-width="1" fill="none" />
<text xml:space="preserve" x="1007.8" y="662.5" font-family='"Liberation Sans", sans-serif' font-size="10.5" fill="#000" font-weight="normal" text-anchor="start" >Level:</text>
<rect x="1051.5" y="650.5" width="23" height="20" fill="#FFFFFF" stroke="#7F9DB9" stroke-width="1" rx="0" />
<text xml:space="preserve" x="1056" y="665" font-family='"Liberation Sans", sans-serif' font-size="10.5" fill="#000" font-weight="normal" text-anchor="start" >0</text>
<rect x="1009.5" y="673.5" width="35.5" height="17" fill="url(#btn)" stroke="#1D3B54" stroke-width="1" rx="3" />
<text xml:space="preserve" x="1027.25" y="686.5" font-family='"Liberation Sans", sans-serif' font-size="10.5" fill="#000" font-weight="normal" text-anchor="middle" >Single</text>
<rect x="1048.5" y="673.5" width="31" height="17" fill="url(#btn)" stroke="#1D3B54" stroke-width="1" rx="3" />
<text xml:space="preserve" x="1052" y="686.5" font-family='"Liberation Sans", sans-serif' font-size="10.5" fill="#000" font-weight="normal" text-anchor="start" >No</text>
<path d="M62,698 L62,478 Q62,471 69,471 L601,471 Q608,471 608,478 L608,698 Z" fill="#0046DF"/>
<path d="M62,501 L62,478 Q62,471 69,471 L601,471 Q608,471 608,478 L608,501 Z" fill="url(#tact)"/>
<rect x="62" y="694" width="546" height="4" fill="#0034C4" stroke="none" stroke-width="1" rx="0" />
<rect x="66" y="501" width="538" height="193" fill="#FFFFFB" stroke="none" stroke-width="1" rx="0" />
<text xml:space="preserve" x="70" y="492.6" font-family='"Liberation Sans", sans-serif' font-size="13" fill="#F4FFFF" font-weight="bold" text-anchor="start" textLength="112" lengthAdjust="spacingAndGlyphs" >Bode Plotter-XBP1</text>
<rect x="581.5" y="477.5" width="19.5" height="20" fill="url(#cact)" stroke="#FFFFFF" stroke-width="1" rx="3" />
<line x1="586.25" y1="482.5" x2="596.25" y2="492.5" stroke="#FFFFFF" stroke-width="2.2" />
<line x1="586.25" y1="492.5" x2="596.25" y2="482.5" stroke="#FFFFFF" stroke-width="2.2" />
<rect x="67" y="501.5" width="291" height="170.5" fill="#FFFFFF" stroke="none" stroke-width="1" rx="0" />
<line x1="66.5" y1="501" x2="66.5" y2="672" stroke="#000" stroke-width="1" />
<line x1="66" y1="501.5" x2="358" y2="501.5" stroke="#000" stroke-width="1" />
<line x1="68" y1="503" x2="357" y2="503" stroke="#A8A48E" stroke-width="2" />
<line x1="68" y1="503" x2="68" y2="671" stroke="#A8A48E" stroke-width="2" />
<line x1="357.5" y1="501" x2="357.5" y2="673" stroke="#000" stroke-width="1" />
<line x1="66" y1="672.5" x2="358" y2="672.5" stroke="#000" stroke-width="1" />
<g stroke-dasharray="3,3">
<line x1="79" y1="509.5" x2="351.5" y2="509.5" stroke="#A8A8A8" stroke-width="1" />
<line x1="79" y1="548.5" x2="351.5" y2="548.5" stroke="#A8A8A8" stroke-width="1" />
<line x1="79" y1="586.5" x2="351.5" y2="586.5" stroke="#A8A8A8" stroke-width="1" />
<line x1="79" y1="625.5" x2="351.5" y2="625.5" stroke="#A8A8A8" stroke-width="1" />
<line x1="215.5" y1="510" x2="215.5" y2="663" stroke="#A8A8A8" stroke-width="1" />
<line x1="351.5" y1="510" x2="351.5" y2="663" stroke="#A8A8A8" stroke-width="1" />
</g>
<line x1="78.5" y1="509" x2="78.5" y2="663" stroke="#000" stroke-width="1" />
<line x1="78" y1="662.5" x2="352" y2="662.5" stroke="#000" stroke-width="1" />
<polyline points="79.0,511.6 81.79,511.87 85.74,512.24 90.5,512.75 95.7,513.4 101.49,514.22 107.99,515.18 114.77,516.28 121.4,517.5 127.92,518.87 134.52,520.39 140.95,521.99 147.0,523.6 152.68,525.26 158.1,526.97 163.12,528.68 167.6,530.3 171.35,531.72 174.48,533.01 177.38,534.37 180.4,536.0 183.68,537.93 187.01,540.06 190.26,542.41 193.3,545.0 196.1,547.84 198.73,550.92 201.19,554.24 203.5,557.8 205.69,561.73 207.74,565.99 209.6,570.32 211.2,574.5 212.49,578.5 213.51,582.44 214.35,586.26 215.1,589.9 215.75,593.28 216.26,596.46 216.69,599.55 217.1,602.7 217.49,605.92 217.84,609.15 218.14,612.38 218.4,615.6 218.61,619.11 218.78,622.81 218.91,626.1 219,628.4" stroke="#E8902A" stroke-width="1.1" fill="none" />
<polyline points="219.2,628.4 219.36,623.6 219.59,616.68 219.9,609.19 220.3,602.7 220.76,597.66 221.29,593.21 221.95,589.01 222.8,584.7 223.85,580.1 225.08,575.43 226.46,570.92 228.0,566.8 229.63,563.22 231.37,560.03 233.36,557.0 235.7,553.9 238.54,550.57 241.77,547.18 245.17,543.94 248.5,541.1 251.72,538.76 254.95,536.77 258.18,535.03 261.4,533.4 264.61,531.89 267.81,530.56 271.0,529.34 274.2,528.2 277.4,527.14 280.59,526.18 283.79,525.28 287.0,524.4 290.22,523.52 293.45,522.67 296.68,521.86 299.9,521.1 303.1,520.38 306.3,519.71 309.5,519.08 312.7,518.5 315.92,517.98 319.15,517.52 322.38,517.1 325.6,516.7 328.82,516.32 332.04,515.97 335.24,515.66 338.4,515.4 341.8,515.21 345.35,515.07 348.5,514.97 350.7,514.9" stroke="#E8902A" stroke-width="1.1" fill="none" />
<line x1="219.5" y1="503" x2="219.5" y2="662" stroke="#D81828" stroke-width="1" />
<polygon points="213.5,503 225.5,503 219.5,510" stroke="none" stroke-width="1" fill="#E01818" />
<circle cx="219.5" cy="506" r="1.5" fill="#FFF"/>
<circle cx="219.5" cy="632" r="3" fill="none" stroke="#D02050" stroke-width="1"/>
<rect x="68" y="676.5" width="27" height="16.5" fill="url(#btn)" stroke="none" stroke-width="1" rx="0" />
<line x1="94.5" y1="676" x2="94.5" y2="693" stroke="#6E6A5A" stroke-width="1.5" />
<line x1="68" y1="692.5" x2="95" y2="692.5" stroke="#6E6A5A" stroke-width="1.5" />
<line x1="68.5" y1="676" x2="68.5" y2="693" stroke="#E0DCC8" stroke-width="1" />
<line x1="68" y1="676.5" x2="95" y2="676.5" stroke="#E0DCC8" stroke-width="1" />
<polygon points="76,685 81,680.5 81,683.8 87,683.8 87,686.2 81,686.2 81,689.5" stroke="none" stroke-width="1" fill="#000" />
<rect x="95.5" y="676.5" width="117" height="16" fill="#FDFDF6" stroke="#D8D4C0" stroke-width="1" rx="0" />
<line x1="95.5" y1="676.5" x2="212.5" y2="676.5" stroke="#B4B09C" stroke-width="1" />
<rect x="213.5" y="676.5" width="116" height="16" fill="#FDFDF6" stroke="#D8D4C0" stroke-width="1" rx="0" />
<line x1="213.5" y1="676.5" x2="329.5" y2="676.5" stroke="#B4B09C" stroke-width="1" />
<text xml:space="preserve" x="113" y="689" font-family='"Liberation Sans", sans-serif' font-size="10.5" fill="#000" font-weight="normal" text-anchor="start" >1.079 kHz</text>
<text xml:space="preserve" x="226.4" y="689" font-family='"Liberation Sans", sans-serif' font-size="10.5" fill="#000" font-weight="normal" text-anchor="start" >-95.681 dB</text>
<rect x="330" y="676.5" width="27.5" height="16.5" fill="url(#btn)" stroke="none" stroke-width="1" rx="0" />
<line x1="357" y1="676" x2="357" y2="693" stroke="#6E6A5A" stroke-width="1.5" />
<line x1="330" y1="692.5" x2="358" y2="692.5" stroke="#6E6A5A" stroke-width="1.5" />
<polygon points="351,685 346,680.5 346,683.8 340,683.8 340,686.2 346,686.2 346,689.5" stroke="none" stroke-width="1" fill="#000" />
<rect x="364.0" y="509.0" width="233.0" height="33.5" fill="none" stroke="#ECEAD2" stroke-width="1" rx="3" />
<rect x="368" y="503.5" width="29" height="9" fill="#FFFFFB" stroke="none" stroke-width="1" rx="0" />
<text xml:space="preserve" x="370" y="512.5" font-family='"Liberation Sans", sans-serif' font-size="10.5" fill="#1F3FBF" font-weight="normal" text-anchor="start" textLength="25" lengthAdjust="spacingAndGlyphs" >Mode</text>
<rect x="386.5" y="519.5" width="93" height="16.5" fill="url(#btn)" stroke="#1D3B54" stroke-width="1" rx="3" />
<text xml:space="preserve" x="433.0" y="531.4" font-family='"Liberation Sans", sans-serif' font-size="10.5" fill="#000" font-weight="normal" text-anchor="middle" >Magnitude</text>
<rect x="484.5" y="519.5" width="92.5" height="16.5" fill="url(#btn)" stroke="#1D3B54" stroke-width="1" rx="3" />
<text xml:space="preserve" x="530.75" y="531.4" font-family='"Liberation Sans", sans-serif' font-size="10.5" fill="#000" font-weight="normal" text-anchor="middle" >Phase</text>
<rect x="364.0" y="550.0" width="115.5" height="81.5" fill="none" stroke="#ECEAD2" stroke-width="1" rx="3" />
<rect x="368" y="544.5" width="51" height="9" fill="#FFFFFB" stroke="none" stroke-width="1" rx="0" />
<text xml:space="preserve" x="370" y="553.5" font-family='"Liberation Sans", sans-serif' font-size="10.5" fill="#1F3FBF" font-weight="normal" text-anchor="start" textLength="47" lengthAdjust="spacingAndGlyphs" >Horizontal</text>
<rect x="481.5" y="550.0" width="115.5" height="81.5" fill="none" stroke="#ECEAD2" stroke-width="1" rx="3" />
<rect x="487.2" y="544.5" width="38" height="9" fill="#FFFFFB" stroke="none" stroke-width="1" rx="0" />
<text xml:space="preserve" x="489.2" y="553.5" font-family='"Liberation Sans", sans-serif' font-size="10.5" fill="#1F3FBF" font-weight="normal" text-anchor="start" textLength="34" lengthAdjust="spacingAndGlyphs" >Vertical</text>
<rect x="376.0" y="564.5" width="42.5" height="15.5" fill="url(#btn)" stroke="#1D3B54" stroke-width="1" rx="3" />
<text xml:space="preserve" x="397.25" y="576.5" font-family='"Liberation Sans", sans-serif' font-size="10.5" fill="#000" font-weight="normal" text-anchor="middle" >Log</text>
<rect x="423.0" y="564.5" width="41.5" height="15.5" fill="url(#btn)" stroke="#1D3B54" stroke-width="1" rx="3" />
<text xml:space="preserve" x="443.75" y="576.5" font-family='"Liberation Sans", sans-serif' font-size="10.5" fill="#000" font-weight="normal" text-anchor="middle" >Lin</text>
<rect x="496.0" y="564.5" width="42.0" height="15.5" fill="url(#btn)" stroke="#1D3B54" stroke-width="1" rx="3" />
<text xml:space="preserve" x="517.0" y="576.5" font-family='"Liberation Sans", sans-serif' font-size="10.5" fill="#000" font-weight="normal" text-anchor="middle" >Log</text>
<rect x="542.5" y="564.5" width="42" height="15.5" fill="url(#btn)" stroke="#1D3B54" stroke-width="1" rx="3" />
<text xml:space="preserve" x="563.5" y="576.5" font-family='"Liberation Sans", sans-serif' font-size="10.5" fill="#000" font-weight="normal" text-anchor="middle" >Lin</text>
<text xml:space="preserve" x="366" y="597" font-family='"Liberation Sans", sans-serif' font-size="10.5" fill="#000" font-weight="normal" text-anchor="start" >F</text>
<text xml:space="preserve" x="365.5" y="618.8" font-family='"Liberation Serif", serif' font-size="12" fill="#000" font-weight="normal" text-anchor="start" >I</text>
<rect x="374.5" y="584.0" width="58" height="18.0" fill="#FFFFFF" stroke="#7F9DB9" stroke-width="1" rx="0" />
<rect x="433.5" y="584.0" width="40.5" height="18.0" fill="#FFFFFF" stroke="#7F9DB9" stroke-width="1" rx="0" />
<rect x="374.5" y="603.5" width="58" height="18" fill="#FFFFFF" stroke="#7F9DB9" stroke-width="1" rx="0" />
<rect x="433.5" y="603.5" width="40.5" height="18" fill="#FFFFFF" stroke="#7F9DB9" stroke-width="1" rx="0" />
<text xml:space="preserve" x="382.4" y="597" font-family='"Liberation Sans", sans-serif' font-size="10.5" fill="#000" font-weight="normal" text-anchor="start" >10</text>
<text xml:space="preserve" x="437.6" y="597" font-family='"Liberation Sans", sans-serif' font-size="10.5" fill="#000" font-weight="normal" text-anchor="start" >kHz</text>
<text xml:space="preserve" x="382.4" y="617" font-family='"Liberation Sans", sans-serif' font-size="10.5" fill="#000" font-weight="normal" text-anchor="start" >100</text>
<text xml:space="preserve" x="441.2" y="617" font-family='"Liberation Sans", sans-serif' font-size="10.5" fill="#000" font-weight="normal" text-anchor="start" >Hz</text>
<text xml:space="preserve" x="485" y="597" font-family='"Liberation Sans", sans-serif' font-size="10.5" fill="#000" font-weight="normal" text-anchor="start" >F</text>
<text xml:space="preserve" x="484.5" y="618.8" font-family='"Liberation Serif", serif' font-size="12" fill="#000" font-weight="normal" text-anchor="start" >I</text>
<rect x="495.5" y="584.0" width="58" height="18.0" fill="#FFFFFF" stroke="#7F9DB9" stroke-width="1" rx="0" />
<rect x="495.5" y="603.5" width="58" height="18" fill="#FFFFFF" stroke="#7F9DB9" stroke-width="1" rx="0" />
<rect x="555" y="583.5" width="38" height="19" fill="#FFFFFF" stroke="none" stroke-width="1" rx="0" />
<rect x="555.5" y="584.0" width="37" height="18" fill="none" stroke="#6F8CA8" stroke-width="1.5" rx="0" />
<rect x="555" y="603" width="38" height="19" fill="#FFFFFF" stroke="none" stroke-width="1" rx="0" />
<rect x="555.5" y="603.5" width="37" height="18" fill="none" stroke="#6F8CA8" stroke-width="1.5" rx="0" />
<text xml:space="preserve" x="501" y="597" font-family='"Liberation Sans", sans-serif' font-size="10.5" fill="#000" font-weight="normal" text-anchor="start" >0</text>
<text xml:space="preserve" x="561.2" y="597" font-family='"Liberation Sans", sans-serif' font-size="10.5" fill="#000" font-weight="normal" text-anchor="start" >dB</text>
<text xml:space="preserve" x="501" y="617" font-family='"Liberation Sans", sans-serif' font-size="10.5" fill="#000" font-weight="normal" text-anchor="start" >-120</text>
<text xml:space="preserve" x="561.2" y="617" font-family='"Liberation Sans", sans-serif' font-size="10.5" fill="#000" font-weight="normal" text-anchor="start" >dB</text>
<rect x="364.0" y="636.5" width="233.0" height="34" fill="none" stroke="#ECEAD2" stroke-width="1" rx="3" />
<rect x="368" y="631" width="44" height="9" fill="#FFFFFB" stroke="none" stroke-width="1" rx="0" />
<text xml:space="preserve" x="370" y="640" font-family='"Liberation Sans", sans-serif' font-size="10.5" fill="#1F3FBF" font-weight="normal" text-anchor="start" textLength="40" lengthAdjust="spacingAndGlyphs" >Controls</text>
<rect x="386.0" y="649.0" width="61.5" height="16.0" fill="url(#btn)" stroke="#1D3B54" stroke-width="1" rx="3" />
<text xml:space="preserve" x="416.75" y="661" font-family='"Liberation Sans", sans-serif' font-size="10.5" fill="#000" font-weight="normal" text-anchor="middle" >Reverse</text>
<rect x="451.0" y="649.0" width="57.0" height="16.0" fill="url(#btn)" stroke="#1D3B54" stroke-width="1" rx="3" />
<text xml:space="preserve" x="479.5" y="661" font-family='"Liberation Sans", sans-serif' font-size="10.5" fill="#000" font-weight="normal" text-anchor="middle" >Save</text>
<rect x="514.5" y="649.0" width="59.5" height="16.0" fill="url(#btn)" stroke="#1D3B54" stroke-width="1" rx="3" />
<text xml:space="preserve" x="544.25" y="661" font-family='"Liberation Sans", sans-serif' font-size="10.5" fill="#000" font-weight="normal" text-anchor="middle" >Set...</text>
<text xml:space="preserve" x="386" y="690" font-family='"Liberation Sans", sans-serif' font-size="11" fill="#000" font-weight="normal" text-anchor="middle" >+</text>
<circle cx="400" cy="684" r="4.5" fill="none" stroke="#F2F0D6" stroke-width="1"/>
<circle cx="400" cy="684" r="1.6" fill="#C8C4B0"/>
<text xml:space="preserve" x="421" y="690" font-family='"Liberation Sans", sans-serif' font-size="10.5" fill="#000" font-weight="normal" text-anchor="middle" >In</text>
<circle cx="441" cy="684" r="4.5" fill="none" stroke="#F2F0D6" stroke-width="1"/>
<circle cx="441" cy="684" r="1.6" fill="#C8C4B0"/>
<line x1="454" y1="685.5" x2="460" y2="685.5" stroke="#000" stroke-width="1" />
<text xml:space="preserve" x="497" y="690" font-family='"Liberation Sans", sans-serif' font-size="11" fill="#000" font-weight="normal" text-anchor="middle" >+</text>
<circle cx="509" cy="684" r="4.5" fill="none" stroke="#F2F0D6" stroke-width="1"/>
<circle cx="509" cy="684" r="1.6" fill="#C8C4B0"/>
<text xml:space="preserve" x="534.5" y="690" font-family='"Liberation Sans", sans-serif' font-size="10.5" fill="#000" font-weight="normal" text-anchor="middle" >Out</text>
<circle cx="553" cy="684" r="4.5" fill="none" stroke="#F2F0D6" stroke-width="1"/>
<circle cx="553" cy="684" r="1.6" fill="#C8C4B0"/>
<line x1="568" y1="685.5" x2="574" y2="685.5" stroke="#000" stroke-width="1" />
<rect x="599" y="691" width="2" height="2" fill="#C8C4B0" stroke="none" stroke-width="1" rx="0" />
<rect x="596" y="691" width="2" height="2" fill="#C8C4B0" stroke="none" stroke-width="1" rx="0" />
<rect x="593" y="691" width="2" height="2" fill="#C8C4B0" stroke="none" stroke-width="1" rx="0" />
<rect x="599" y="688" width="2" height="2" fill="#C8C4B0" stroke="none" stroke-width="1" rx="0" />
<rect x="596" y="688" width="2" height="2" fill="#C8C4B0" stroke="none" stroke-width="1" rx="0" />
<rect x="599" y="685" width="2" height="2" fill="#C8C4B0" stroke="none" stroke-width="1" rx="0" />
</svg></body></html>
